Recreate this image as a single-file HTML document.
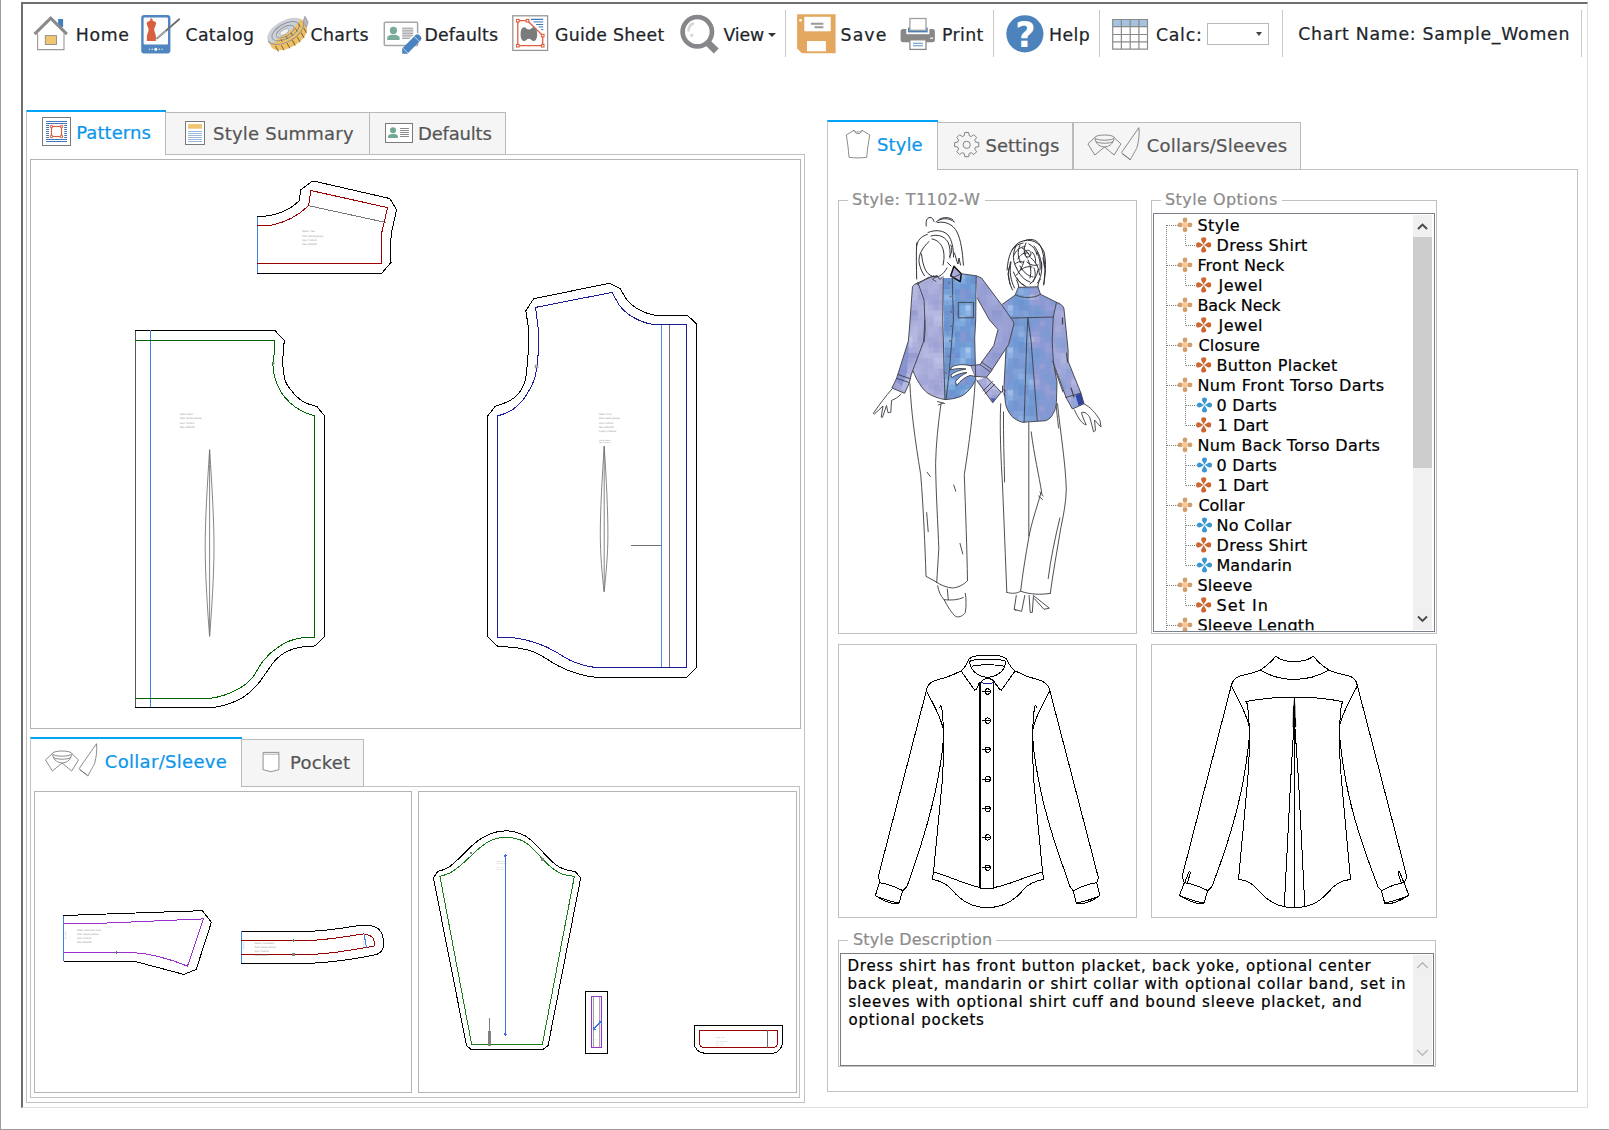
<!DOCTYPE html>
<html lang="en"><head><meta charset="utf-8"><title>Pattern Designer - Sample_Women</title>
<style>
html,body{margin:0;padding:0;background:#fff;}
body{width:1609px;height:1130px;position:relative;overflow:hidden;font-family:"DejaVu Sans","Liberation Sans",sans-serif;}
.t{position:absolute;white-space:pre;display:block;-webkit-text-stroke:0.22px currentColor;}
.b{position:absolute;box-sizing:border-box;}
svg{position:absolute;overflow:visible;}
.clip{clip-path:inset(0 0 6px 0);}

</style></head>
<body>
<!-- outer window edges -->
<div class="b" style="left:0;top:0;width:1px;height:1130px;background:#9a9a9a"></div>
<div class="b" style="left:0;top:1129px;width:1609px;height:1px;background:#9a9a9a"></div>
<!-- inset frame -->
<div class="b" style="left:21px;top:2px;width:1567px;height:1106px;border-style:solid;border-width:2px 1px 1px 2px;border-color:#6f6f6f #dedede #dedede #6f6f6f"></div>
<!-- toolbar separators -->
<div class="b" style="left:785px;top:10px;width:1px;height:47px;background:#c9c9c9"></div>
<div class="b" style="left:993px;top:10px;width:1px;height:47px;background:#c9c9c9"></div>
<div class="b" style="left:1099px;top:10px;width:1px;height:47px;background:#c9c9c9"></div>
<div class="b" style="left:1282px;top:10px;width:1px;height:47px;background:#c9c9c9"></div>
<div class="b" style="left:1581px;top:10px;width:1px;height:47px;background:#c9c9c9"></div>
<!-- calc select -->
<div class="b" style="left:1207px;top:23px;width:62px;height:22px;border:1px solid #b9b9b9;background:#fff"></div>
<div class="b" style="left:1256px;top:32px;width:0;height:0;border-left:3.5px solid transparent;border-right:3.5px solid transparent;border-top:4px solid #444"></div>
<div class="b" style="left:768px;top:33px;width:0;height:0;border-left:4px solid transparent;border-right:4px solid transparent;border-top:4px solid #333"></div>

<!-- LEFT PANEL: outer tab container -->
<div class="b" style="left:26px;top:154px;width:779px;height:949px;border:1px solid #c2c2c2"></div>
<!-- tabs -->
<div class="b" style="left:26px;top:110px;width:140px;height:45px;border-left:1px solid #c2c2c2;border-top:2px solid #00a2fa;background:#fff"></div>
<div class="b" style="left:165px;top:112px;width:205px;height:43px;border:1px solid #bababa;background:#f5f5f5"></div>
<div class="b" style="left:369px;top:112px;width:137px;height:43px;border:1px solid #bababa;background:#f5f5f5"></div>
<!-- pattern box -->
<div class="b" style="left:30px;top:159px;width:771px;height:570px;border:1px solid #b4b4b4"></div>
<!-- lower tab container -->
<div class="b" style="left:30px;top:786px;width:770px;height:312px;border:1px solid #c2c2c2"></div>
<div class="b" style="left:30px;top:737px;width:212px;height:50px;border-left:1px solid #c2c2c2;border-top:2px solid #00a2fa;background:#fff"></div>
<div class="b" style="left:241px;top:739px;width:123px;height:48px;border:1px solid #bababa;background:#f5f5f5"></div>
<div class="b" style="left:34px;top:791px;width:378px;height:302px;border:1px solid #b4b4b4"></div>
<div class="b" style="left:418px;top:791px;width:379px;height:302px;border:1px solid #b4b4b4"></div>

<!-- RIGHT PANEL -->
<div class="b" style="left:827px;top:169px;width:751px;height:923px;border:1px solid #c2c2c2"></div>
<div class="b" style="left:827px;top:120px;width:111px;height:50px;border-left:1px solid #c2c2c2;border-top:2px solid #00a2fa;background:#fff"></div>
<div class="b" style="left:937px;top:122px;width:136px;height:48px;border:1px solid #bababa;background:#f5f5f5"></div>
<div class="b" style="left:1073px;top:122px;width:228px;height:48px;border:1px solid #bababa;background:#f5f5f5"></div>
<!-- fieldsets -->
<div class="b" style="left:838px;top:200px;width:299px;height:434px;border:1px solid #c0c0c0"></div>
<div class="b" style="left:848px;top:190px;width:137px;height:20px;background:#fff"></div>
<div class="b" style="left:1151px;top:200px;width:286px;height:434px;border:1px solid #c0c0c0"></div>
<div class="b" style="left:1161px;top:190px;width:121px;height:20px;background:#fff"></div>
<!-- tree box -->
<div class="b" style="left:1153px;top:213px;width:282px;height:419px;border:1px solid #7c828c;background:#fff"></div>
<div class="b" style="left:1413px;top:215px;width:19px;height:415px;background:#f0f0f0"></div>
<div class="b" style="left:1413px;top:237px;width:19px;height:231px;background:#cdcdcd"></div>
<!-- flats -->
<div class="b" style="left:838px;top:644px;width:299px;height:274px;border:1px solid #c0c0c0"></div>
<div class="b" style="left:1151px;top:644px;width:286px;height:274px;border:1px solid #c0c0c0"></div>
<!-- description -->
<div class="b" style="left:838px;top:940px;width:598px;height:127px;border:1px solid #c0c0c0"></div>
<div class="b" style="left:848px;top:930px;width:148px;height:20px;background:#fff"></div>
<div class="b" style="left:840px;top:953px;width:594px;height:113px;border:1px solid #7c7c7c;background:#fff"></div>
<div class="b" style="left:1413px;top:955px;width:19px;height:109px;background:#f0f0f0"></div>

<svg width="1609" height="1130" viewBox="0 0 1609 1130" style="left:0;top:0">
<!-- HOME -->
<g>
<rect x="58.1" y="19" width="5" height="8" fill="#3f7fbf"/>
<path d="M37.6 33.5V49.6H64V33.5" fill="#fff" stroke="#9a9a9a" stroke-width="1.1"/>
<path d="M34.6 34.2L50.7 18.2L66.9 34.2" fill="none" stroke="#8a8a8a" stroke-width="3.1" stroke-linejoin="miter"/>
<rect x="45.3" y="35.6" width="11.2" height="8.9" fill="#f0c674" stroke="#8a8a8a" stroke-width="0.9"/>
</g>
<!-- CATALOG -->
<g>
<rect x="141.2" y="15" width="29.2" height="38.6" rx="3" fill="#4f86c0"/>
<rect x="143.6" y="17.6" width="24.4" height="26.8" rx="1" fill="#fbfcfe"/>
<path d="M151.4 18.2c-1 0-1.3 1.6-1.3 2.6c-1.8 .4-3.4 1.2-3.4 2.4c0 2.2 1.9 4.2 1.9 6.4c0 2.4-1.7 4.4-1.7 7.2v4.2h9v-4.2c0-2.8-1.7-4.800-1.700-7.200c0-2.200 1.900-4.200 1.900-6.400c0-1.200-1.600-2-3.400-2.400c0-1-.3-2.600-1.300-2.600z" fill="#d9603f"/>
<path d="M157.200 38.300L179.200 19.300" stroke="#6e6e6e" stroke-width="1.8" stroke-linecap="round"/>
<path d="M157.200 38.300L166 30.700" stroke="#b0b0b0" stroke-width="1.200"/>
<circle cx="155.800" cy="49.200" r="1.500" fill="#fff"/>
<circle cx="152.200" cy="49.200" r=".8" fill="#dfe9f4"/><circle cx="149.400" cy="49.200" r=".7" fill="#dfe9f4"/>
<circle cx="159.400" cy="49.200" r=".8" fill="#dfe9f4"/><circle cx="162.200" cy="49.200" r=".7" fill="#dfe9f4"/>
</g>
<!-- CHARTS tape measure -->
<g transform="rotate(-29 286 32)">
<path d="M266 31v7c0 5.500 9 10 20 10s20-4.500 20-10v-7z" fill="#efc062"/>
<ellipse cx="286" cy="31" rx="20" ry="10.500" fill="#cdd0d7"/>
<path d="M269 36.500C275 41 283 41.500 286 41.500C297 41.500 306 37 306 31C306 29.500 305.500 28.500 305 27.500C300 31.500 292 33.500 284 33.500C278 33.500 272 34.500 269 36.500z" fill="#efc062"/>
<ellipse cx="286" cy="31" rx="15" ry="7.300" fill="none" stroke="#8f939c" stroke-width=".9"/>
<ellipse cx="285.500" cy="31.200" rx="10" ry="4.600" fill="none" stroke="#8f939c" stroke-width=".9"/>
<ellipse cx="284.500" cy="31.200" rx="5" ry="2.200" fill="#f3f4f6" stroke="#9fa3ab" stroke-width=".7"/>
<path d="M266 31c0 5.500 9 10.500 20 10.500s20-5 20-10.500" fill="none" stroke="#8a8c93" stroke-width=".9"/>
<path d="M270 39v6.500M275.500 41.200v6M281.500 42.200v6M287.500 42.300v6M293.500 41.700v6M299 40v6M303.500 37v5.500" stroke="#6f5f3f" stroke-width=".9"/>
<path d="M284 35.500v3M290 35v3.500M296 33.500v3.500M301 31v3.500M278 36v2.500" stroke="#6f5f3f" stroke-width=".8"/>
<path d="M306 31l4.200-3.500v6.500l-4.200 4z" fill="#b4b7be" stroke="#8a8c93" stroke-width=".6"/>
</g>
<!-- DEFAULTS card+pencil -->
<g>
<rect x="384.300" y="22.300" width="33.300" height="23.200" rx="1" fill="#fff" stroke="#a6a6a6" stroke-width="1.500"/>
<circle cx="393.400" cy="30.400" r="3.600" fill="#7aab98"/>
<path d="M387.200 39.900v-2.200c0-1.800 2.600-2.600 4.800-2.900h2.800c2.200.3 4.800 1.100 4.800 2.900v2.200z" fill="#7aab98"/>
<rect x="402.200" y="27.700" width="11" height="11.200" fill="#dcdcdc"/>
<path d="M402.200 28.200h11M402.200 30.800h11M402.200 33.300h11M402.200 35.800h11M402.200 38.400h11" stroke="#a2a2a2" stroke-width="1"/>
<path d="M409 39l8-6.500l4.500 5.500l-8 6.500z" fill="#fff"/>
<path d="M402.200 53.800v-5.300l13.300-13.400a2.600 2.600 0 0 1 3.700 0l1.500 1.500a2.600 2.600 0 0 1 0 3.700l-13.300 13.400z" fill="#4a84c0"/>
<path d="M403.200 48.400l4.800 4.800M414.600 36.800l4.800 4.800" stroke="#dbe7f4" stroke-width=".8"/>
</g>
<!-- GUIDE SHEET -->
<g>
<rect x="512.800" y="15.800" width="34.800" height="34.600" fill="#fff" stroke="#979797" stroke-width="1.300"/>
<path d="M517.800 20.700H527.500L542.700 35.600V45.700H517.800z" fill="none" stroke="#e0603f" stroke-width="1.300"/>
<g fill="#fff" stroke="#e0603f" stroke-width="1.100">
<rect x="516.500" y="19.400" width="2.600" height="2.600"/><rect x="526.200" y="19.400" width="2.600" height="2.600"/>
<rect x="541.400" y="34.300" width="2.600" height="2.600"/><rect x="541.400" y="44.400" width="2.600" height="2.600"/><rect x="516.500" y="44.400" width="2.600" height="2.600"/>
</g>
<path d="M524.300 27.300c1.600 0 2.400 2.300 4.600 2.300s3-2.300 4.600-2.300c2.600 0 3.700 3.200 3.700 6.900s-1.100 6.900-3.700 6.900c-1.600 0-2.400-2.300-4.600-2.300s-3 2.300-4.600 2.300c-2.600 0-3.700-3.200-3.700-6.900s1.100-6.900 3.700-6.900z" fill="#7b7b7b"/>
<path d="M531 19.400h12.200M536.100 24.500h7.100" stroke="#3f77bb" stroke-width="1.100"/>
<path d="M533.500 21.900h9.700M538.600 26.900h4.600" stroke="#8fb0d8" stroke-width="1.600"/>
<path d="M541.200 29.500h2" stroke="#3f77bb" stroke-width="1"/>
</g>
<!-- VIEW magnifier -->
<g>
<path d="M708 43l8.300 8" stroke="#86878a" stroke-width="7" />
<circle cx="697.300" cy="31.700" r="14.700" fill="#fff" stroke="#86878a" stroke-width="4.700"/>
<path d="M688.500 30.500c.3-3.500 2.200-6 4.500-7" fill="none" stroke="#d6d7d9" stroke-width="2.600" stroke-linecap="round"/>
<circle cx="691.700" cy="35.300" r="1.700" fill="#d6d7d9"/>
</g>
<!-- SAVE -->
<g>
<path d="M797.100 14.200H835.600V53.300H801.900L797.100 48.500z" fill="#e3a75f"/>
<rect x="804.300" y="16.800" width="26.400" height="14.500" fill="#fff"/>
<rect x="807" y="41" width="18.900" height="10.300" fill="#fff"/>
<circle cx="800.500" cy="20.300" r="1.300" fill="#fff"/>
<path d="M810.900 23.800h12.500M814.600 27.300h8.800" stroke="#9b9b9b" stroke-width="2"/>
</g>
<!-- PRINT -->
<g>
<rect x="900.600" y="28.900" width="34.300" height="13.400" rx="2.500" fill="#888"/>
<rect x="906.300" y="28" width="23.100" height="6.200" fill="#fff"/>
<rect x="908" y="27.600" width="19.700" height="4.800" fill="#4a7fb8"/>
<rect x="909.900" y="18.500" width="16.100" height="11.800" fill="#fff" stroke="#a0a0a0" stroke-width="1.300"/>
<rect x="909.900" y="39.800" width="16.100" height="9.600" fill="#fff" stroke="#888" stroke-width="1.300"/>
<path d="M913 43.300h9.900M913 45.700h9.900" stroke="#5b8cc2" stroke-width="1.100"/>
<rect x="930.200" y="37.500" width="2.900" height="1.500" fill="#e8e8e8"/>
</g>
<!-- HELP -->
<circle cx="1024.900" cy="33.800" r="18.600" fill="#4d83bc"/>
<text x="1025.300" y="46.800" text-anchor="middle" font-family="DejaVu Sans, Liberation Sans, sans-serif" font-weight="bold" font-size="35" fill="#fff">?</text>
<!-- CALC grid -->
<g>
<rect x="1112.700" y="19.500" width="34.800" height="7.100" fill="#a5c3e0"/>
<path d="M1112.700 19.500H1147.500V49.200H1112.700zM1121.400 19.500V49.200M1130.200 19.500V49.200M1138.900 19.500V49.200M1112.700 26.600H1147.500M1112.700 34.500H1147.500M1112.700 41.800H1147.500" fill="none" stroke="#8a8a8a" stroke-width="1.200"/>
</g>
</svg>

<svg width="1609" height="1130" viewBox="0 0 1609 1130" style="left:0;top:0">
<!-- Patterns icon -->
<g>
<rect x="42.500" y="117.500" width="28" height="28" fill="#fff" stroke="#7a7a7a" stroke-width="1"/>
<path d="M46.100 121.500H67M46.100 123.500H67M46.100 139.500H67M46.100 141.500H67" stroke="#3f77bb" stroke-width="1"/>
<path d="M46.100 125.500H49M46.100 127.500H49M46.100 129.500H49M46.100 131.500H49M46.100 133.500H49M46.100 135.500H49M46.100 137.500H49M64.200 125.500H67M64.200 127.500H67M64.200 129.500H67M64.200 131.500H67M64.200 133.500H67M64.200 135.500H67M64.200 137.500H67" stroke="#3f77bb" stroke-width="1"/>
<rect x="51.500" y="126.500" width="10" height="10" fill="none" stroke="#d85a3a" stroke-width="1.100"/>
<g fill="#fff" stroke="#d85a3a" stroke-width="1"><rect x="50.300" y="125.300" width="2.400" height="2.400" rx=".6"/><rect x="60.300" y="125.300" width="2.400" height="2.400" rx=".6"/><rect x="50.300" y="135.300" width="2.400" height="2.400" rx=".6"/><rect x="60.300" y="135.300" width="2.400" height="2.400" rx=".6"/></g>
</g>
<!-- Style Summary icon -->
<g>
<rect x="185.500" y="121.500" width="19" height="23" fill="#fff" stroke="#7a7a7a" stroke-width="1"/>
<rect x="188.100" y="124.100" width="13.900" height="4.600" fill="#efc472"/>
<path d="M188.100 131.500H202M188.100 133.500H202M188.100 135.500H202M188.100 137.500H202M188.100 139.500H202M188.100 141.500H202" stroke="#8faed4" stroke-width=".9"/>
</g>
<!-- Defaults tab icon -->
<g>
<rect x="385.500" y="123.500" width="27" height="19" fill="#fff" stroke="#7a7a7a" stroke-width="1"/>
<circle cx="393" cy="130.300" r="3" fill="#72a892"/>
<path d="M388.100 137.900v-1.800c0-1.400 2-2 3.800-2.200h2.200c1.800.2 3.800.8 3.800 2.200v1.800z" fill="#72a892"/>
<path d="M400.100 128.500H408.900M400.100 130.500H408.900M400.100 132.500H408.900M400.100 134.500H408.900M400.100 136.500H408.900" stroke="#7a7a7a" stroke-width=".9"/>
</g>
<!-- Style (shirt) icon -->
<path d="M846.300 135L854 130.300C855.500 134.800 860.600 134.800 862.100 130.300L869.800 135C868.600 142 867.300 149 866.700 157.300C861 158.100 854.700 158.100 849 157.300C848.400 149 847.500 142 846.300 135z" fill="#fff" stroke="#6e6e6e" stroke-width=".8"/>
<path d="M854 130.300C855.500 132.600 860.600 132.600 862.100 130.300" fill="none" stroke="#6e6e6e" stroke-width=".7"/>
<!-- Settings gear -->
<g fill="none" stroke="#777" stroke-width=".9">
<path id="gearp" d="M964.700 132.500h4l.5 3.200 2 .85 2.600-1.900 2.850 2.850-1.900 2.600.85 2 3.200.5v4l-3.200.5-.85 2 1.900 2.600-2.850 2.850-2.600-1.900-2 .85-.5 3.200h-4l-.5-3.200-2-.85-2.600 1.900-2.850-2.850 1.900-2.600-.85-2-3.200-.5v-4l3.200-.5.85-2-1.900-2.600 2.850-2.850 2.600 1.900 2-.85z"/>
<circle cx="966.700" cy="144.800" r="3.600"/>
</g>
<!-- collar/sleeve icon (lower tab) -->
<g id="cs1" fill="none" stroke="#6e6e6e" stroke-width=".8">
<ellipse cx="62.100" cy="753.600" rx="9.700" ry="2.600"/>
<path d="M52.400 753.600L45.500 759.900L52.400 771L62.100 763L71.700 771L78.500 759.900L71.700 753.600"/>
<path d="M52.600 754.800C54 761 58 762.500 62.100 763C66.200 762.500 70.200 761 71.600 754.800"/>
<path d="M53.500 757.500C57 759.800 67 759.800 70.700 757.500"/>
<path d="M96.500 743.700L79.100 768.600L87.800 776C91.500 769 94 765 94.600 763.600C96.300 757 97.300 750 96.500 743.700z"/>
<path d="M79.700 769.800L87.400 775"/>
</g>
<!-- collar/sleeve icon (right tab) -->
<g fill="none" stroke="#6e6e6e" stroke-width=".8" transform="translate(1042.400 -616)">
<ellipse cx="62.100" cy="753.600" rx="9.700" ry="2.600"/>
<path d="M52.400 753.600L45.500 759.900L52.400 771L62.100 763L71.700 771L78.500 759.900L71.700 753.600"/>
<path d="M52.600 754.800C54 761 58 762.500 62.100 763C66.200 762.500 70.200 761 71.600 754.800"/>
<path d="M53.500 757.500C57 759.800 67 759.800 70.700 757.500"/>
<path d="M96.500 743.700L79.100 768.600L87.800 776C91.500 769 94 765 94.600 763.600C96.300 757 97.300 750 96.500 743.700z"/>
<path d="M79.700 769.800L87.400 775"/>
</g>
<!-- pocket icon -->
<path d="M263.100 752.400H278.900V769.700L271 771.700L263.100 769.700z" fill="#fff" stroke="#777" stroke-width=".8"/>
<path d="M263.100 754.200H278.900" stroke="#999" stroke-width=".8"/>
</svg>

<svg width="1609" height="1130" viewBox="0 0 1609 1130" style="left:0;top:0">
<clipPath id="treeclip"><rect x="1154" y="214" width="259" height="417"/></clipPath>
<g clip-path="url(#treeclip)">
<path d="M1166.5 225V640" stroke="#7f7f7f" stroke-width="1" stroke-dasharray="1 1" fill="none"/>
<path d="M1167 225.5H1178" stroke="#7f7f7f" stroke-width="1" stroke-dasharray="1 1" fill="none"/>
<path d="M1185.5 235V245.5" stroke="#7f7f7f" stroke-width="1" stroke-dasharray="1 1" fill="none"/>
<path d="M1186 245.5H1196.5" stroke="#7f7f7f" stroke-width="1" stroke-dasharray="1 1" fill="none"/>
<path d="M1167 265.5H1178" stroke="#7f7f7f" stroke-width="1" stroke-dasharray="1 1" fill="none"/>
<path d="M1185.5 275V285.5" stroke="#7f7f7f" stroke-width="1" stroke-dasharray="1 1" fill="none"/>
<path d="M1186 285.5H1196.5" stroke="#7f7f7f" stroke-width="1" stroke-dasharray="1 1" fill="none"/>
<path d="M1167 305.5H1178" stroke="#7f7f7f" stroke-width="1" stroke-dasharray="1 1" fill="none"/>
<path d="M1185.5 315V325.5" stroke="#7f7f7f" stroke-width="1" stroke-dasharray="1 1" fill="none"/>
<path d="M1186 325.5H1196.5" stroke="#7f7f7f" stroke-width="1" stroke-dasharray="1 1" fill="none"/>
<path d="M1167 345.5H1178" stroke="#7f7f7f" stroke-width="1" stroke-dasharray="1 1" fill="none"/>
<path d="M1185.5 355V365.5" stroke="#7f7f7f" stroke-width="1" stroke-dasharray="1 1" fill="none"/>
<path d="M1186 365.5H1196.5" stroke="#7f7f7f" stroke-width="1" stroke-dasharray="1 1" fill="none"/>
<path d="M1167 385.5H1178" stroke="#7f7f7f" stroke-width="1" stroke-dasharray="1 1" fill="none"/>
<path d="M1185.5 395V425.5" stroke="#7f7f7f" stroke-width="1" stroke-dasharray="1 1" fill="none"/>
<path d="M1186 405.5H1196.5" stroke="#7f7f7f" stroke-width="1" stroke-dasharray="1 1" fill="none"/>
<path d="M1186 425.5H1196.5" stroke="#7f7f7f" stroke-width="1" stroke-dasharray="1 1" fill="none"/>
<path d="M1167 445.5H1178" stroke="#7f7f7f" stroke-width="1" stroke-dasharray="1 1" fill="none"/>
<path d="M1185.5 455V485.5" stroke="#7f7f7f" stroke-width="1" stroke-dasharray="1 1" fill="none"/>
<path d="M1186 465.5H1196.5" stroke="#7f7f7f" stroke-width="1" stroke-dasharray="1 1" fill="none"/>
<path d="M1186 485.5H1196.5" stroke="#7f7f7f" stroke-width="1" stroke-dasharray="1 1" fill="none"/>
<path d="M1167 505.5H1178" stroke="#7f7f7f" stroke-width="1" stroke-dasharray="1 1" fill="none"/>
<path d="M1185.5 515V565.5" stroke="#7f7f7f" stroke-width="1" stroke-dasharray="1 1" fill="none"/>
<path d="M1186 525.5H1196.5" stroke="#7f7f7f" stroke-width="1" stroke-dasharray="1 1" fill="none"/>
<path d="M1186 545.5H1196.5" stroke="#7f7f7f" stroke-width="1" stroke-dasharray="1 1" fill="none"/>
<path d="M1186 565.5H1196.5" stroke="#7f7f7f" stroke-width="1" stroke-dasharray="1 1" fill="none"/>
<path d="M1167 585.5H1178" stroke="#7f7f7f" stroke-width="1" stroke-dasharray="1 1" fill="none"/>
<path d="M1185.5 595V605.5" stroke="#7f7f7f" stroke-width="1" stroke-dasharray="1 1" fill="none"/>
<path d="M1186 605.5H1196.5" stroke="#7f7f7f" stroke-width="1" stroke-dasharray="1 1" fill="none"/>
<path d="M1167 625.5H1178" stroke="#7f7f7f" stroke-width="1" stroke-dasharray="1 1" fill="none"/>
<rect x="1182.4" y="222.3" width="5.2" height="5.2" fill="#f9c794"/><circle cx="1185.0" cy="220.0" r="2.45" fill="#d19f6d"/><circle cx="1189.9" cy="224.9" r="2.45" fill="#d19f6d"/><circle cx="1185.0" cy="229.8" r="2.45" fill="#d19f6d"/><circle cx="1180.1" cy="224.9" r="2.45" fill="#d19f6d"/>
<path transform="rotate(0 1203.7 244.9)" d="M1203.7 244.6C1202.7 242.3 1201.1 241.1 1201.1 239.6A2.6 2.3 0 0 1 1206.3 239.6C1206.3 241.1 1204.7 242.3 1203.7 244.6z" fill="#cc6633"/><path transform="rotate(90 1203.7 244.9)" d="M1203.7 244.6C1202.7 242.3 1201.1 241.1 1201.1 239.6A2.6 2.3 0 0 1 1206.3 239.6C1206.3 241.1 1204.7 242.3 1203.7 244.6z" fill="#cc6633"/><path transform="rotate(180 1203.7 244.9)" d="M1203.7 244.6C1202.7 242.3 1201.1 241.1 1201.1 239.6A2.6 2.3 0 0 1 1206.3 239.6C1206.3 241.1 1204.7 242.3 1203.7 244.6z" fill="#cc6633"/><path transform="rotate(270 1203.7 244.9)" d="M1203.7 244.6C1202.7 242.3 1201.1 241.1 1201.1 239.6A2.6 2.3 0 0 1 1206.3 239.6C1206.3 241.1 1204.7 242.3 1203.7 244.6z" fill="#cc6633"/>
<rect x="1182.4" y="262.3" width="5.2" height="5.2" fill="#f9c794"/><circle cx="1185.0" cy="260.0" r="2.45" fill="#d19f6d"/><circle cx="1189.9" cy="264.9" r="2.45" fill="#d19f6d"/><circle cx="1185.0" cy="269.8" r="2.45" fill="#d19f6d"/><circle cx="1180.1" cy="264.9" r="2.45" fill="#d19f6d"/>
<path transform="rotate(0 1203.7 284.9)" d="M1203.7 284.6C1202.7 282.3 1201.1 281.1 1201.1 279.6A2.6 2.3 0 0 1 1206.3 279.6C1206.3 281.1 1204.7 282.3 1203.7 284.6z" fill="#cc6633"/><path transform="rotate(90 1203.7 284.9)" d="M1203.7 284.6C1202.7 282.3 1201.1 281.1 1201.1 279.6A2.6 2.3 0 0 1 1206.3 279.6C1206.3 281.1 1204.7 282.3 1203.7 284.6z" fill="#cc6633"/><path transform="rotate(180 1203.7 284.9)" d="M1203.7 284.6C1202.7 282.3 1201.1 281.1 1201.1 279.6A2.6 2.3 0 0 1 1206.3 279.6C1206.3 281.1 1204.7 282.3 1203.7 284.6z" fill="#cc6633"/><path transform="rotate(270 1203.7 284.9)" d="M1203.7 284.6C1202.7 282.3 1201.1 281.1 1201.1 279.6A2.6 2.3 0 0 1 1206.3 279.6C1206.3 281.1 1204.7 282.3 1203.7 284.6z" fill="#cc6633"/>
<rect x="1182.4" y="302.3" width="5.2" height="5.2" fill="#f9c794"/><circle cx="1185.0" cy="300.0" r="2.45" fill="#d19f6d"/><circle cx="1189.9" cy="304.9" r="2.45" fill="#d19f6d"/><circle cx="1185.0" cy="309.8" r="2.45" fill="#d19f6d"/><circle cx="1180.1" cy="304.9" r="2.45" fill="#d19f6d"/>
<path transform="rotate(0 1203.7 324.9)" d="M1203.7 324.6C1202.7 322.3 1201.1 321.1 1201.1 319.6A2.6 2.3 0 0 1 1206.3 319.6C1206.3 321.1 1204.7 322.3 1203.7 324.6z" fill="#cc6633"/><path transform="rotate(90 1203.7 324.9)" d="M1203.7 324.6C1202.7 322.3 1201.1 321.1 1201.1 319.6A2.6 2.3 0 0 1 1206.3 319.6C1206.3 321.1 1204.7 322.3 1203.7 324.6z" fill="#cc6633"/><path transform="rotate(180 1203.7 324.9)" d="M1203.7 324.6C1202.7 322.3 1201.1 321.1 1201.1 319.6A2.6 2.3 0 0 1 1206.3 319.6C1206.3 321.1 1204.7 322.3 1203.7 324.6z" fill="#cc6633"/><path transform="rotate(270 1203.7 324.9)" d="M1203.7 324.6C1202.7 322.3 1201.1 321.1 1201.1 319.6A2.6 2.3 0 0 1 1206.3 319.6C1206.3 321.1 1204.7 322.3 1203.7 324.6z" fill="#cc6633"/>
<rect x="1182.4" y="342.3" width="5.2" height="5.2" fill="#f9c794"/><circle cx="1185.0" cy="340.0" r="2.45" fill="#d19f6d"/><circle cx="1189.9" cy="344.9" r="2.45" fill="#d19f6d"/><circle cx="1185.0" cy="349.8" r="2.45" fill="#d19f6d"/><circle cx="1180.1" cy="344.9" r="2.45" fill="#d19f6d"/>
<path transform="rotate(0 1203.7 364.9)" d="M1203.7 364.6C1202.7 362.3 1201.1 361.1 1201.1 359.6A2.6 2.3 0 0 1 1206.3 359.6C1206.3 361.1 1204.7 362.3 1203.7 364.6z" fill="#cc6633"/><path transform="rotate(90 1203.7 364.9)" d="M1203.7 364.6C1202.7 362.3 1201.1 361.1 1201.1 359.6A2.6 2.3 0 0 1 1206.3 359.6C1206.3 361.1 1204.7 362.3 1203.7 364.6z" fill="#cc6633"/><path transform="rotate(180 1203.7 364.9)" d="M1203.7 364.6C1202.7 362.3 1201.1 361.1 1201.1 359.6A2.6 2.3 0 0 1 1206.3 359.6C1206.3 361.1 1204.7 362.3 1203.7 364.6z" fill="#cc6633"/><path transform="rotate(270 1203.7 364.9)" d="M1203.7 364.6C1202.7 362.3 1201.1 361.1 1201.1 359.6A2.6 2.3 0 0 1 1206.3 359.6C1206.3 361.1 1204.7 362.3 1203.7 364.6z" fill="#cc6633"/>
<rect x="1182.4" y="382.3" width="5.2" height="5.2" fill="#f9c794"/><circle cx="1185.0" cy="380.0" r="2.45" fill="#d19f6d"/><circle cx="1189.9" cy="384.9" r="2.45" fill="#d19f6d"/><circle cx="1185.0" cy="389.8" r="2.45" fill="#d19f6d"/><circle cx="1180.1" cy="384.9" r="2.45" fill="#d19f6d"/>
<path transform="rotate(0 1204.5 405.0)" d="M1204.5 404.7C1203.5 402.4 1201.9 401.2 1201.9 399.7A2.6 2.3 0 0 1 1207.1 399.7C1207.1 401.2 1205.5 402.4 1204.5 404.7z" fill="#3b97d0"/><path transform="rotate(90 1204.5 405.0)" d="M1204.5 404.7C1203.5 402.4 1201.9 401.2 1201.9 399.7A2.6 2.3 0 0 1 1207.1 399.7C1207.1 401.2 1205.5 402.4 1204.5 404.7z" fill="#3b97d0"/><path transform="rotate(180 1204.5 405.0)" d="M1204.5 404.7C1203.5 402.4 1201.9 401.2 1201.9 399.7A2.6 2.3 0 0 1 1207.1 399.7C1207.1 401.2 1205.5 402.4 1204.5 404.7z" fill="#3b97d0"/><path transform="rotate(270 1204.5 405.0)" d="M1204.5 404.7C1203.5 402.4 1201.9 401.2 1201.9 399.7A2.6 2.3 0 0 1 1207.1 399.7C1207.1 401.2 1205.5 402.4 1204.5 404.7z" fill="#3b97d0"/>
<path transform="rotate(0 1203.7 424.9)" d="M1203.7 424.6C1202.7 422.3 1201.1 421.1 1201.1 419.6A2.6 2.3 0 0 1 1206.3 419.6C1206.3 421.1 1204.7 422.3 1203.7 424.6z" fill="#cc6633"/><path transform="rotate(90 1203.7 424.9)" d="M1203.7 424.6C1202.7 422.3 1201.1 421.1 1201.1 419.6A2.6 2.3 0 0 1 1206.3 419.6C1206.3 421.1 1204.7 422.3 1203.7 424.6z" fill="#cc6633"/><path transform="rotate(180 1203.7 424.9)" d="M1203.7 424.6C1202.7 422.3 1201.1 421.1 1201.1 419.6A2.6 2.3 0 0 1 1206.3 419.6C1206.3 421.1 1204.7 422.3 1203.7 424.6z" fill="#cc6633"/><path transform="rotate(270 1203.7 424.9)" d="M1203.7 424.6C1202.7 422.3 1201.1 421.1 1201.1 419.6A2.6 2.3 0 0 1 1206.3 419.6C1206.3 421.1 1204.7 422.3 1203.7 424.6z" fill="#cc6633"/>
<rect x="1182.4" y="442.3" width="5.2" height="5.2" fill="#f9c794"/><circle cx="1185.0" cy="440.0" r="2.45" fill="#d19f6d"/><circle cx="1189.9" cy="444.9" r="2.45" fill="#d19f6d"/><circle cx="1185.0" cy="449.8" r="2.45" fill="#d19f6d"/><circle cx="1180.1" cy="444.9" r="2.45" fill="#d19f6d"/>
<path transform="rotate(0 1204.5 465.0)" d="M1204.5 464.7C1203.5 462.4 1201.9 461.2 1201.9 459.7A2.6 2.3 0 0 1 1207.1 459.7C1207.1 461.2 1205.5 462.4 1204.5 464.7z" fill="#3b97d0"/><path transform="rotate(90 1204.5 465.0)" d="M1204.5 464.7C1203.5 462.4 1201.9 461.2 1201.9 459.7A2.6 2.3 0 0 1 1207.1 459.7C1207.1 461.2 1205.5 462.4 1204.5 464.7z" fill="#3b97d0"/><path transform="rotate(180 1204.5 465.0)" d="M1204.5 464.7C1203.5 462.4 1201.9 461.2 1201.9 459.7A2.6 2.3 0 0 1 1207.1 459.7C1207.1 461.2 1205.5 462.4 1204.5 464.7z" fill="#3b97d0"/><path transform="rotate(270 1204.5 465.0)" d="M1204.5 464.7C1203.5 462.4 1201.9 461.2 1201.9 459.7A2.6 2.3 0 0 1 1207.1 459.7C1207.1 461.2 1205.5 462.4 1204.5 464.7z" fill="#3b97d0"/>
<path transform="rotate(0 1203.7 484.9)" d="M1203.7 484.6C1202.7 482.3 1201.1 481.1 1201.1 479.6A2.6 2.3 0 0 1 1206.3 479.6C1206.3 481.1 1204.7 482.3 1203.7 484.6z" fill="#cc6633"/><path transform="rotate(90 1203.7 484.9)" d="M1203.7 484.6C1202.7 482.3 1201.1 481.1 1201.1 479.6A2.6 2.3 0 0 1 1206.3 479.6C1206.3 481.1 1204.7 482.3 1203.7 484.6z" fill="#cc6633"/><path transform="rotate(180 1203.7 484.9)" d="M1203.7 484.6C1202.7 482.3 1201.1 481.1 1201.1 479.6A2.6 2.3 0 0 1 1206.3 479.6C1206.3 481.1 1204.7 482.3 1203.7 484.6z" fill="#cc6633"/><path transform="rotate(270 1203.7 484.9)" d="M1203.7 484.6C1202.7 482.3 1201.1 481.1 1201.1 479.6A2.6 2.3 0 0 1 1206.3 479.6C1206.3 481.1 1204.7 482.3 1203.7 484.6z" fill="#cc6633"/>
<rect x="1182.4" y="502.3" width="5.2" height="5.2" fill="#f9c794"/><circle cx="1185.0" cy="500.0" r="2.45" fill="#d19f6d"/><circle cx="1189.9" cy="504.9" r="2.45" fill="#d19f6d"/><circle cx="1185.0" cy="509.8" r="2.45" fill="#d19f6d"/><circle cx="1180.1" cy="504.9" r="2.45" fill="#d19f6d"/>
<path transform="rotate(0 1204.5 525.0)" d="M1204.5 524.7C1203.5 522.4 1201.9 521.2 1201.9 519.7A2.6 2.3 0 0 1 1207.1 519.7C1207.1 521.2 1205.5 522.4 1204.5 524.7z" fill="#3b97d0"/><path transform="rotate(90 1204.5 525.0)" d="M1204.5 524.7C1203.5 522.4 1201.9 521.2 1201.9 519.7A2.6 2.3 0 0 1 1207.1 519.7C1207.1 521.2 1205.5 522.4 1204.5 524.7z" fill="#3b97d0"/><path transform="rotate(180 1204.5 525.0)" d="M1204.5 524.7C1203.5 522.4 1201.9 521.2 1201.9 519.7A2.6 2.3 0 0 1 1207.1 519.7C1207.1 521.2 1205.5 522.4 1204.5 524.7z" fill="#3b97d0"/><path transform="rotate(270 1204.5 525.0)" d="M1204.5 524.7C1203.5 522.4 1201.9 521.2 1201.9 519.7A2.6 2.3 0 0 1 1207.1 519.7C1207.1 521.2 1205.5 522.4 1204.5 524.7z" fill="#3b97d0"/>
<path transform="rotate(0 1203.7 544.9)" d="M1203.7 544.6C1202.7 542.3 1201.1 541.1 1201.1 539.6A2.6 2.3 0 0 1 1206.3 539.6C1206.3 541.1 1204.7 542.3 1203.7 544.6z" fill="#cc6633"/><path transform="rotate(90 1203.7 544.9)" d="M1203.7 544.6C1202.7 542.3 1201.1 541.1 1201.1 539.6A2.6 2.3 0 0 1 1206.3 539.6C1206.3 541.1 1204.7 542.3 1203.7 544.6z" fill="#cc6633"/><path transform="rotate(180 1203.7 544.9)" d="M1203.7 544.6C1202.7 542.3 1201.1 541.1 1201.1 539.6A2.6 2.3 0 0 1 1206.3 539.6C1206.3 541.1 1204.7 542.3 1203.7 544.6z" fill="#cc6633"/><path transform="rotate(270 1203.7 544.9)" d="M1203.7 544.6C1202.7 542.3 1201.1 541.1 1201.1 539.6A2.6 2.3 0 0 1 1206.3 539.6C1206.3 541.1 1204.7 542.3 1203.7 544.6z" fill="#cc6633"/>
<path transform="rotate(0 1204.5 565.0)" d="M1204.5 564.7C1203.5 562.4 1201.9 561.2 1201.9 559.7A2.6 2.3 0 0 1 1207.1 559.7C1207.1 561.2 1205.5 562.4 1204.5 564.7z" fill="#3b97d0"/><path transform="rotate(90 1204.5 565.0)" d="M1204.5 564.7C1203.5 562.4 1201.9 561.2 1201.9 559.7A2.6 2.3 0 0 1 1207.1 559.7C1207.1 561.2 1205.5 562.4 1204.5 564.7z" fill="#3b97d0"/><path transform="rotate(180 1204.5 565.0)" d="M1204.5 564.7C1203.5 562.4 1201.9 561.2 1201.9 559.7A2.6 2.3 0 0 1 1207.1 559.7C1207.1 561.2 1205.5 562.4 1204.5 564.7z" fill="#3b97d0"/><path transform="rotate(270 1204.5 565.0)" d="M1204.5 564.7C1203.5 562.4 1201.9 561.2 1201.9 559.7A2.6 2.3 0 0 1 1207.1 559.7C1207.1 561.2 1205.5 562.4 1204.5 564.7z" fill="#3b97d0"/>
<rect x="1182.4" y="582.3" width="5.2" height="5.2" fill="#f9c794"/><circle cx="1185.0" cy="580.0" r="2.45" fill="#d19f6d"/><circle cx="1189.9" cy="584.9" r="2.45" fill="#d19f6d"/><circle cx="1185.0" cy="589.8" r="2.45" fill="#d19f6d"/><circle cx="1180.1" cy="584.9" r="2.45" fill="#d19f6d"/>
<path transform="rotate(0 1203.7 604.9)" d="M1203.7 604.6C1202.7 602.3 1201.1 601.1 1201.1 599.6A2.6 2.3 0 0 1 1206.3 599.6C1206.3 601.1 1204.7 602.3 1203.7 604.6z" fill="#cc6633"/><path transform="rotate(90 1203.7 604.9)" d="M1203.7 604.6C1202.7 602.3 1201.1 601.1 1201.1 599.6A2.6 2.3 0 0 1 1206.3 599.6C1206.3 601.1 1204.7 602.3 1203.7 604.6z" fill="#cc6633"/><path transform="rotate(180 1203.7 604.9)" d="M1203.7 604.6C1202.7 602.3 1201.1 601.1 1201.1 599.6A2.6 2.3 0 0 1 1206.3 599.6C1206.3 601.1 1204.7 602.3 1203.7 604.6z" fill="#cc6633"/><path transform="rotate(270 1203.7 604.9)" d="M1203.7 604.6C1202.7 602.3 1201.1 601.1 1201.1 599.6A2.6 2.3 0 0 1 1206.3 599.6C1206.3 601.1 1204.7 602.3 1203.7 604.6z" fill="#cc6633"/>
<rect x="1182.4" y="622.3" width="5.2" height="5.2" fill="#f9c794"/><circle cx="1185.0" cy="620.0" r="2.45" fill="#d19f6d"/><circle cx="1189.9" cy="624.9" r="2.45" fill="#d19f6d"/><circle cx="1185.0" cy="629.8" r="2.45" fill="#d19f6d"/><circle cx="1180.1" cy="624.9" r="2.45" fill="#d19f6d"/>
</g>
<path d="M1418 229L1422.5 224.5L1427 229" fill="none" stroke="#484848" stroke-width="1.9"/>
<path d="M1418 616.5L1422.5 621L1427 616.5" fill="none" stroke="#484848" stroke-width="1.9"/>
<path d="M1417.2 968L1422.5 962.7L1427.8 968" fill="none" stroke="#b8b8b8" stroke-width="1.5"/>
<path d="M1417.2 1050L1422.5 1055.3L1427.8 1050" fill="none" stroke="#b8b8b8" stroke-width="1.5"/>
</svg>
<svg width="1609" height="1130" viewBox="0 0 1609 1130" style="left:0;top:0" fill="none" stroke-linejoin="round" shape-rendering="crispEdges">
<!-- YOKE -->
<g stroke-width="1">
<path d="M257.300 216.600C275 216.600 289 210.500 299 201L300.900 189.800L312 181.400H315.100L389.700 198.500L396.600 209.700L391.600 232.100L390.300 244.500L391 262.500L381.600 273.400H257.300" stroke="#000"/>
<path d="M257.300 216.600V273.400" stroke="#3f7fe0"/>
<path d="M308.600 205.700L386 222.500" stroke="#777"/>
<path d="M257.300 225.300H271C285 222.500 298 216 308.600 205.700L310.800 190.500L387.600 207.600L381 235.800L381.600 263.200H257.300" stroke="#990000"/>
</g>
<!-- BACK -->
<g stroke-width="1">
<path d="M135.200 707.400V330.100" stroke="#555"/>
<path d="M135.200 330.100H274.600L284.400 340.700L283.500 347.200L282.600 363.900L284.400 377.800C286 384 288 387 290.900 389.900C294 394.500 297.500 398 302.100 401C307 403.800 312 405.500 317 406.600L324.800 416.300V636.300L314.700 646C309 646.300 304 646.500 299.100 647.400C289 649.500 281.500 653.500 275.800 659.700C270 666 266 673.500 260.200 681.100C255 687.800 249.500 693.500 242.700 697.600C235 702 226 705.500 216.400 707H135.200" stroke="#000"/>
<path d="M150.700 330.100V707.400" stroke="#3f7fe0"/>
<path d="M135.200 340.100H274.600V350.900L272.700 363.900L274.200 375C275.500 380.500 277.500 385.500 279.800 389.900C283.500 396.500 288.500 402 294.700 406.600C300.500 410.800 307.500 414 314.700 415.900V637.300L303 637.700C294 638.800 286.500 641.500 279.700 646C273.500 650 268.500 654.500 264.100 659.700C260 664.800 257.500 670 254.300 675.200C250 681.500 244 686 236.800 689.800C229 693.800 220.500 696.800 211.500 698.200H135.200" stroke="#006400"/>
<path d="M271.800 363.400H275M273.300 361.900V364.900" stroke="#777" stroke-width=".8"/>
<g stroke="#707070" stroke-width=".85" shape-rendering="geometricPrecision">
<path d="M209.600 449.700V636.300"/>
<path d="M209.600 449.700C207 490 205.200 520 205.200 546.700C205.200 575 207.500 610 209.600 636.300C211.700 610 214 575 214 546.700C214 520 212.200 490 209.600 449.700z"/>
</g>
</g>
<!-- FRONT -->
<g stroke-width="1">
<path d="M487.400 636.500V416.400L495.200 406.300C502 404.500 508 402 513.100 398.500C517.500 395.500 520.500 391.500 522.800 386.800C524.500 383.200 525.600 379.500 526.300 375.200L528.300 351.800V326.500L525.800 310.900L533.600 298.800L609.500 283.200L620.200 288.500L625.100 297.300C628.500 302 632.500 306 637.700 308.900C642.500 311.800 648 314 654.300 315.200H687.400L696.600 324.100V667.700L686.400 677.400H596.800C590 676.800 583.500 675.500 577.400 673.500C570.500 671.500 564 669 557.900 665.700C551 662 545 657.500 538.400 654C531 650.500 523 648.500 515 647.600L497.500 646.200L487.400 636.500z" stroke="#000"/>
<path d="M497.500 637.100V416C503 414.500 508.500 412.300 513.100 409.200C518.500 405.500 523 400.500 526.700 394.600C529.800 389.800 532.500 384.800 534.500 379C536 373.500 536.800 367.500 537.400 361.500L538.800 347.900L538.400 330.400L535.500 307.400L612 292.400L619.200 305C623 310 628 314.500 633.800 317.700C639 320.700 645 323 651.400 324.100L686.400 324.500V667.300L593 667.100C586 666.300 579.800 664.500 573.500 661.800C568 659.500 563 656.500 557.900 653.100C550.500 648.500 543 645 534.500 642.300C527 640 519 638.200 511.200 637.500L497.500 637.100z" stroke="#1a1a96"/>
<path d="M661.700 324.500V667.300" stroke="#4a8ae8"/>
<path d="M669.300 324.500V667.300" stroke="#707070"/>
<path d="M630.900 545.400H661.100" stroke="#707070"/>
<rect x="535.200" y="365.200" width="2.600" height="2.600" stroke="#777" stroke-width=".8" fill="#ccc"/>
<g stroke="#707070" stroke-width=".85" shape-rendering="geometricPrecision">
<path d="M604.200 446.200V591.700"/>
<path d="M604.200 446.200C602 480 600.300 510 600.300 534.300C600.300 555 602.200 575 604.100 591.700C606 575 607.900 555 607.900 534.300C607.900 510 606.400 480 604.200 446.200z"/>
</g>
</g>
<!-- COLLAR -->
<g stroke-width="1">
<path d="M63.500 915.500L202.300 910.700L211.400 922.200L196.200 969.400L183.800 974.400L134.800 961.400H63.500" stroke="#000"/>
<path d="M63.500 915.500V961.400" stroke="#3f7fe0"/>
<path d="M63.500 923.700H91.300L203.400 918.900L187.500 966.100C170 959 150 953.500 132.700 952.600H63.500" stroke="#9932cc"/>
<path d="M114.800 952.200H117.800M116.300 950.700V953.700" stroke="#666" stroke-width="1"/>
</g>
<!-- COLLAR BAND -->
<g stroke-width="1">
<path d="M241.400 931.300H311C328 930.500 344 928 358.900 925.500H369.800C377.500 926.500 381.800 931 382.800 936.800C383.800 940 384.200 943 383.900 945.500C383 950 380.500 953 376.300 954.600C356 959 334 962 311 963.300H241.400" stroke="#000"/>
<path d="M241.400 931.300V963.300" stroke="#3f7fe0"/>
<path d="M241.400 940.500H311C329 939.500 346 936.800 363.200 933.900C370 934.500 373.500 937.500 374.100 941.100V946.100L365.400 947.600C347 951 329 953.500 311 954.600H241.400" stroke="#990000"/>
<path d="M363.900 933.500L366.500 947.600" stroke="#3f7fe0"/>
<path d="M292.400 940.500H294.800M293.600 939.300V941.900" stroke="#666"/>
<rect x="292.100" y="953.300" width="3" height="3" fill="#808080"/>
</g>
<!-- SLEEVE -->
<g stroke-width="1">
<path d="M433.400 877.900L437.700 871.400C442 870.500 446 869 449 867.100C456 862 462.500 855 468.800 848.700C474 843.500 479.500 839 485.800 836C492 832.800 498.500 830.900 505.600 830.900C512.500 830.900 519.500 832.800 525.400 836C532 839.800 537 845.500 542.400 851.600C548 858 553 863.500 559.400 867.100C564 869.500 569.500 870.800 575 871.400L580.700 877.900L548.100 1045.500L542.400 1049.800H471.600L466.500 1045.500z" stroke="#000"/>
<path d="M439.900 876.200C443.500 875.500 447 874.500 450.400 872.800C458 868.500 465 861.500 471.600 855.200C477 850 482.500 845 488.600 841.600C494 838.800 499.500 837.400 505.600 837.400C512 837.400 518.500 838.800 524 841.600C530 845 535 850.500 539.600 855.800C545.500 862.500 552 868.800 559.400 872.800C564 875 569 876 574.400 876.200L542.400 1044.100H471.600z" stroke="#1b7a1b"/>
<path d="M505.600 854.400V1035.600M504.100 856.400L505.600 854.400L507.100 856.400M504.100 1033.600L505.600 1035.600L507.100 1033.600" stroke="#3f6fe0"/>
<path d="M489.500 1017.800V1045.500" stroke="#808080"/>
<path d="M489.500 1031V1045.500" stroke="#808080" stroke-width="2.400"/>
<rect x="470" y="851.800" width="2.400" height="2.400" fill="#808080"/>
<rect x="541.200" y="858.200" width="2.600" height="2.600" fill="#808080"/>
</g>
<!-- PLACKET -->
<g stroke-width="1">
<rect x="585.200" y="991.200" width="22.700" height="62" stroke="#000"/>
<rect x="591.200" y="996" width="10.700" height="51.800" stroke="#9932cc"/>
<path d="M593.400 996V1047.800M599.700 996V1047.800" stroke="#777" stroke-width=".8"/>
<path d="M593.400 1029.100L601.100 1021.500M593.400 1026.800V1029.100H595.700M598.800 1021.500H601.100V1023.800" stroke="#3f6fe0"/>
</g>
<!-- CUFF -->
<g stroke-width="1">
<path d="M694.200 1025.200H782.600V1041.500C782.600 1048 778 1053.200 772 1053.200H704.500C698.500 1053.200 694.200 1048 694.200 1043z" stroke="#000"/>
<path d="M699.300 1030.300H777.500V1042.500C777.500 1045.500 775.500 1047.800 772.500 1047.800H704.300C701.300 1047.800 699.300 1045.500 699.300 1042.500z" stroke="#990000"/>
<path d="M767.600 1030.300V1047.800" stroke="#666"/>
</g>
</svg>

<svg width="1609" height="1130" viewBox="0 0 1609 1130" style="left:0;top:0" font-family="DejaVu Sans, Liberation Sans, sans-serif" fill="#8e8e8e">
<text x="302.3" y="231.8" font-size="2.3" textLength="12.5" lengthAdjust="spacingAndGlyphs">Pattern: Yoke</text><text x="302.3" y="236.8" font-size="2.3" textLength="21" lengthAdjust="spacingAndGlyphs">Chart: Sample_Women</text><text x="302.3" y="240.8" font-size="2.3" textLength="14" lengthAdjust="spacingAndGlyphs">Style: T1102-W</text><text x="302.3" y="244.9" font-size="2.3" textLength="14.5" lengthAdjust="spacingAndGlyphs">Date: 6/30/2020</text>
<text x="179.8" y="414.7" font-size="2.3" textLength="13" lengthAdjust="spacingAndGlyphs">Pattern: Back</text><text x="179.8" y="418.8" font-size="2.3" textLength="22" lengthAdjust="spacingAndGlyphs">Chart: Sample_Women</text><text x="179.8" y="423.5" font-size="2.3" textLength="14.5" lengthAdjust="spacingAndGlyphs">Style: T1102-W</text><text x="179.8" y="427.7" font-size="2.3" textLength="15" lengthAdjust="spacingAndGlyphs">Date: 6/30/2020</text>
<text x="599" y="415" font-size="2.3" textLength="12.5" lengthAdjust="spacingAndGlyphs">Pattern: Front</text><text x="599" y="419.1" font-size="2.3" textLength="21" lengthAdjust="spacingAndGlyphs">Chart: Sample_Women</text><text x="599" y="424" font-size="2.3" textLength="14" lengthAdjust="spacingAndGlyphs">Style: T1102-W</text><text x="599" y="427.9" font-size="2.3" textLength="14.6" lengthAdjust="spacingAndGlyphs">Date: 6/30/2020</text><text x="599" y="431.9" font-size="2.3" textLength="17.5" lengthAdjust="spacingAndGlyphs">Property of Designer</text>
<text x="599" y="441" font-size="1.9" textLength="11.7" lengthAdjust="spacingAndGlyphs">Add Seam Allowance</text><text x="599" y="443.1" font-size="1.9" textLength="11" lengthAdjust="spacingAndGlyphs">Apply Ease Values</text>
<text x="77" y="930.7" font-size="2.3" textLength="24" lengthAdjust="spacingAndGlyphs">Pattern: Dress Shirt Collar</text><text x="77" y="934.9" font-size="2.3" textLength="21.5" lengthAdjust="spacingAndGlyphs">Chart: Sample_Women</text><text x="77" y="938.8" font-size="2.3" textLength="14" lengthAdjust="spacingAndGlyphs">Style: T1102-W</text><text x="77" y="942.9" font-size="2.3" textLength="14.6" lengthAdjust="spacingAndGlyphs">Date: 6/30/2020</text>
<text x="254.5" y="943.6" font-size="2.3" textLength="19.6" lengthAdjust="spacingAndGlyphs">Pattern: Collar Band</text><text x="254.5" y="947.9" font-size="2.3" textLength="21.5" lengthAdjust="spacingAndGlyphs">Chart: Sample_Women</text><text x="254.5" y="951.8" font-size="2.3" textLength="14" lengthAdjust="spacingAndGlyphs">Style: T1102-W</text><text x="254.5" y="955.5" font-size="2.3" textLength="14" lengthAdjust="spacingAndGlyphs">Date: 6/30/2020</text>
<text x="496.6" y="862.4" font-size="1.2" textLength="9.6" lengthAdjust="spacingAndGlyphs">Pattern: Sleeve</text><text x="496.6" y="864.4" font-size="1.2" textLength="10.5" lengthAdjust="spacingAndGlyphs">Chart: Sample_Women</text><text x="496.6" y="867.5" font-size="1.2" textLength="7" lengthAdjust="spacingAndGlyphs">Style: T1102-W</text><text x="496.6" y="869.5" font-size="1.2" textLength="7" lengthAdjust="spacingAndGlyphs">Date: 6/30/2020</text>
<text x="715.8" y="1038.3" font-size="1.2" textLength="8" lengthAdjust="spacingAndGlyphs">Pattern: Cuff</text><text x="715.8" y="1041.7" font-size="1.2" textLength="11.6" lengthAdjust="spacingAndGlyphs">Chart: Sample_Women</text><text x="715.8" y="1043.7" font-size="1.2" textLength="7.5" lengthAdjust="spacingAndGlyphs">Style: T1102-W</text><text x="715.8" y="1045.7" font-size="1.2" textLength="7.5" lengthAdjust="spacingAndGlyphs">Date: 6/30/2020</text>
<text transform="translate(66.2 938.5) rotate(-90)" font-size="1.7" textLength="7" lengthAdjust="spacingAndGlyphs">Place on Fold</text>
<text transform="translate(243.8 949) rotate(-90)" font-size="1.7" textLength="7" lengthAdjust="spacingAndGlyphs">Place on Fold</text>
<text transform="translate(364 948) rotate(-90)" font-size="1.7" textLength="7" lengthAdjust="spacingAndGlyphs">Place on Fold</text>
<text x="593.6" y="1039.6" font-size="1.1" textLength="3.4" lengthAdjust="spacingAndGlyphs">Placket</text>
</svg>
<svg width="1609" height="1130" viewBox="0 0 1609 1130" style="left:0;top:0" fill="none" stroke="#000" stroke-width="1" stroke-linejoin="round" stroke-linecap="butt" shape-rendering="crispEdges">
<!-- FRONT FLAT -->
<g>
<!-- collar -->
<path d="M968.300 660.400C970 656.500 978 655 987.700 655C997.400 655 1005.500 656.500 1007.400 660.400"/>
<path d="M969.300 661.500C975 658.300 1000.500 658.300 1006.400 661.500"/>
<path d="M971.500 666.300C979 664.300 996.500 664.300 1004 666.300"/>
<path d="M969.800 660.800C969.500 670 978 677 987.700 677.300C997.400 677 1006 670 1005.700 660.800"/>
<path d="M968.300 660.400C966.500 665 964 668.500 961 670.900L974.700 690.200L976.700 689L979.600 682.200"/>
<path d="M1007.400 660.400C1009.200 665 1012 668.500 1015.100 670.900L1001.400 690.200L999.500 689L994.100 681.800"/>
<path d="M981.500 681.800C983.500 677.600 992 677.600 994.100 681.800"/>
<path d="M981.300 682.600C985 684 990.500 684 994.100 682.300" stroke="#1a1a96"/>
<!-- shoulders & sleeves -->
<path d="M961 670.900C953 675 945 678 937.600 679.700C932 681 928.500 684.500 927.100 687.800L878.600 875.300L879.400 882.600"/>
<path d="M1015.100 670.900C1023 675 1031 678 1037.800 679.700C1043.500 681 1047.500 684.500 1049.100 687.800L1098.400 877.800L1096.700 882.600"/>
<path d="M926.300 691.100C933 703 940.500 716 943.200 729"/>
<path d="M1049.800 691.100C1043 703 1035.700 716 1033 729"/>
<path d="M940 707.500C940 705 941.500 705 941.800 707.500C942.800 717 943.800 727 943.700 740C943.600 760 942.800 772 942.400 780L933.500 872.100L932.400 879.400"/>
<path d="M1036.200 707.500C1036.200 705 1034.700 705 1034.400 707.500C1033.400 717 1032.400 727 1032.500 740C1032.600 760 1033.300 772 1033.700 780L1042.600 872.100L1043.600 879.400"/>
<path d="M943.200 741C942 758 939.500 770 937.600 780C930 820 918 855 906.900 886.700L902.800 890.700"/>
<path d="M1033 741C1034.200 758 1036.700 770 1038.600 780C1046 820 1059 855 1070.100 886.700L1073.300 890.700"/>
<!-- cuffs -->
<path d="M879.400 882.600C888 884 896 887 902.800 890.700L898.800 903.600C891 904.500 882 900 875.400 895.500z"/>
<path d="M876 896.400C883 898.500 891 902 898.500 902.800"/>
<path d="M1096.700 882.600C1088 884 1080 887 1073.300 890.700L1076.500 903.600C1085 904.500 1094 900 1100 895.500z"/>
<path d="M1099.400 896.400C1092.500 898.500 1084.500 902 1077 902.800"/>
<!-- hems -->
<path d="M933.500 872.100C950 876 965 885 980.400 887.500M994.100 887.500C1010 885 1026 876 1042.600 872.100"/>
<path d="M932.400 879.400C941 881 947 884 952.100 889.900C960 900 972 907.500 987.700 907.700C1003 907.500 1015 900 1023.200 889.900C1028 884 1035 881 1043.600 879.400"/>
<!-- placket -->
<path d="M979.900 681.800V888" stroke-width="1.700" stroke-linecap="butt"/>
<path d="M993.800 682.500V888M979.900 888H993.800"/>
<g stroke-width="1">
<circle cx="987.700" cy="691.500" r="2.700"/><path d="M982 691.500H989.500"/>
<circle cx="987.700" cy="720.600" r="2.700"/><path d="M982 720.600H989.500"/>
<circle cx="987.700" cy="749.700" r="2.700"/><path d="M982 749.700H989.500"/>
<circle cx="987.700" cy="779.100" r="2.700"/><path d="M982 779.100H989.500"/>
<circle cx="987.700" cy="808.800" r="2.700"/><path d="M982 808.800H989.500"/>
<circle cx="987.700" cy="837.400" r="2.700"/><path d="M982 837.400H989.500"/>
<circle cx="987.700" cy="867.700" r="2.700"/><path d="M982 867.700H989.500"/>
</g>
</g>
<!-- BACK FLAT -->
<g>
<path d="M1275.700 656.300C1281 660.500 1287 661.600 1294.300 661.600C1301.500 661.600 1308 660.500 1313.400 656.300"/>
<path d="M1275.700 656.300C1271 662 1266 666.500 1260.300 670C1271 676.500 1282 679.400 1294.300 679.400C1306.500 679.400 1318 676.500 1329 670C1323 666.500 1318 662 1313.400 656.300"/>
<path d="M1260.300 670C1254 673 1247 674.500 1241 675.700C1236 677 1232.500 681 1231.300 685.400L1182 877L1184.400 882.600"/>
<path d="M1329 670C1335 673 1342 674.500 1348.400 675.700C1353 677 1356.500 681 1357.300 685.400L1406.900 877L1404.200 882.600"/>
<path d="M1231.300 686C1239 700 1246 713 1249 725.800"/>
<path d="M1357.300 686C1350 700 1342.500 713 1339.500 725.800"/>
<path d="M1246.500 704.200L1245.800 701.600C1262 698.500 1278 697 1294.300 697C1310.500 697 1327 698.500 1342.800 701.600L1342 704.200"/>
<path d="M1247.400 703.200C1248.500 715 1249.500 725 1249.500 735C1249.500 755 1248.500 770 1247.700 780L1238.500 879.400"/>
<path d="M1341.500 703.200C1340.300 715 1339.400 725 1339.400 735C1339.400 755 1340.500 770 1341.500 780L1350.500 879.400"/>
<path d="M1249.200 738C1247.500 757 1245 770 1243.400 780C1236 820 1224 855 1211.900 886.700L1207.800 890.700"/>
<path d="M1339.800 738C1341.500 757 1344 770 1345.700 780C1353 820 1366 855 1378 886.700L1381.500 890.700"/>
<!-- cuffs -->
<path d="M1184.400 882.600C1193 884 1201 887 1207.800 890.700L1203.800 903.600C1196 904.500 1186 899.500 1179.500 895.100z"/>
<path d="M1180.300 896.200C1187.500 898.300 1196 902 1203.500 902.800"/>
<path d="M1185 882L1188.500 873C1189.300 871 1190.800 871.500 1190.300 873.500L1187.300 883"/>
<path d="M1404.200 882.600C1395.500 884 1388 887 1381.500 890.700L1384.800 903.600C1393 904.500 1402.500 899.500 1408.700 895.100z"/>
<path d="M1408 896.200C1400.800 898.300 1392.500 902 1385 902.800"/>
<path d="M1403.600 882L1400 873C1399.200 871 1397.700 871.500 1398.200 873.500L1401.300 883"/>
<!-- hem -->
<path d="M1238.500 879.400C1244 880 1248 881.500 1250.600 883.400C1255 886 1258 889.500 1260.300 892.300C1264.500 897 1269 901 1274.900 903.600C1281 906.500 1288 907.700 1294.300 907.700C1300.500 907.700 1307.500 906.500 1313.700 903.600C1319.500 901 1324 897 1328.200 892.300C1330.500 889.500 1333.500 886 1337.900 883.400C1341 881.500 1345 880 1350.500 879.400"/>
<!-- pleat -->
<path d="M1294.300 697.500V907.500"/>
<path d="M1293.500 706L1294.300 700L1295.100 706L1295.800 727H1292.800z" fill="#000" stroke-width=".5"/>
<path d="M1293.800 725.800L1290.700 780L1284.300 906M1294.800 725.800L1298.500 780L1304.800 906"/>
</g>
</svg>

<svg width="1609" height="1130" viewBox="0 0 1609 1130" style="left:0;top:0" fill="none" stroke-linejoin="round" stroke-linecap="round">
<defs><pattern id="plav" width="42.40" height="42.40" patternUnits="userSpaceOnUse" x="870" y="215"><rect x="0.00" y="0.00" width="6.00" height="6.00" fill="#adb0dc"/><rect x="0.00" y="5.30" width="6.00" height="6.00" fill="#a9acd9"/><rect x="0.00" y="10.60" width="6.00" height="6.00" fill="#969cd0"/><rect x="0.00" y="15.90" width="6.00" height="6.00" fill="#a3a7d7"/><rect x="0.00" y="21.20" width="6.00" height="6.00" fill="#adb0dc"/><rect x="0.00" y="26.50" width="6.00" height="6.00" fill="#b4b7e0"/><rect x="0.00" y="31.80" width="6.00" height="6.00" fill="#b4b7e0"/><rect x="0.00" y="37.10" width="6.00" height="6.00" fill="#b4b7e0"/><rect x="5.30" y="0.00" width="6.00" height="6.00" fill="#a9acd9"/><rect x="5.30" y="5.30" width="6.00" height="6.00" fill="#adb0dc"/><rect x="5.30" y="10.60" width="6.00" height="6.00" fill="#adb0dc"/><rect x="5.30" y="15.90" width="6.00" height="6.00" fill="#a9acd9"/><rect x="5.30" y="21.20" width="6.00" height="6.00" fill="#adb0dc"/><rect x="5.30" y="26.50" width="6.00" height="6.00" fill="#adb0dc"/><rect x="5.30" y="31.80" width="6.00" height="6.00" fill="#a9acd9"/><rect x="5.30" y="37.10" width="6.00" height="6.00" fill="#a3a7d7"/><rect x="10.60" y="0.00" width="6.00" height="6.00" fill="#adb0dc"/><rect x="10.60" y="5.30" width="6.00" height="6.00" fill="#b4b7e0"/><rect x="10.60" y="10.60" width="6.00" height="6.00" fill="#b4b7e0"/><rect x="10.60" y="15.90" width="6.00" height="6.00" fill="#a9acd9"/><rect x="10.60" y="21.20" width="6.00" height="6.00" fill="#a9acd9"/><rect x="10.60" y="26.50" width="6.00" height="6.00" fill="#a9acd9"/><rect x="10.60" y="31.80" width="6.00" height="6.00" fill="#a3a7d7"/><rect x="10.60" y="37.10" width="6.00" height="6.00" fill="#a3a7d7"/><rect x="15.90" y="0.00" width="6.00" height="6.00" fill="#a3a7d7"/><rect x="15.90" y="5.30" width="6.00" height="6.00" fill="#adb0dc"/><rect x="15.90" y="10.60" width="6.00" height="6.00" fill="#b4b7e0"/><rect x="15.90" y="15.90" width="6.00" height="6.00" fill="#adb0dc"/><rect x="15.90" y="21.20" width="6.00" height="6.00" fill="#a9acd9"/><rect x="15.90" y="26.50" width="6.00" height="6.00" fill="#adb0dc"/><rect x="15.90" y="31.80" width="6.00" height="6.00" fill="#adb0dc"/><rect x="15.90" y="37.10" width="6.00" height="6.00" fill="#a3a7d7"/><rect x="21.20" y="0.00" width="6.00" height="6.00" fill="#9da2d4"/><rect x="21.20" y="5.30" width="6.00" height="6.00" fill="#a3a7d7"/><rect x="21.20" y="10.60" width="6.00" height="6.00" fill="#b4b7e0"/><rect x="21.20" y="15.90" width="6.00" height="6.00" fill="#babde5"/><rect x="21.20" y="21.20" width="6.00" height="6.00" fill="#b4b7e0"/><rect x="21.20" y="26.50" width="6.00" height="6.00" fill="#adb0dc"/><rect x="21.20" y="31.80" width="6.00" height="6.00" fill="#a9acd9"/><rect x="21.20" y="37.10" width="6.00" height="6.00" fill="#a3a7d7"/><rect x="26.50" y="0.00" width="6.00" height="6.00" fill="#a3a7d7"/><rect x="26.50" y="5.30" width="6.00" height="6.00" fill="#a9acd9"/><rect x="26.50" y="10.60" width="6.00" height="6.00" fill="#b4b7e0"/><rect x="26.50" y="15.90" width="6.00" height="6.00" fill="#babde5"/><rect x="26.50" y="21.20" width="6.00" height="6.00" fill="#b4b7e0"/><rect x="26.50" y="26.50" width="6.00" height="6.00" fill="#a3a7d7"/><rect x="26.50" y="31.80" width="6.00" height="6.00" fill="#a3a7d7"/><rect x="26.50" y="37.10" width="6.00" height="6.00" fill="#a9acd9"/><rect x="31.80" y="0.00" width="6.00" height="6.00" fill="#b4b7e0"/><rect x="31.80" y="5.30" width="6.00" height="6.00" fill="#adb0dc"/><rect x="31.80" y="10.60" width="6.00" height="6.00" fill="#a9acd9"/><rect x="31.80" y="15.90" width="6.00" height="6.00" fill="#a9acd9"/><rect x="31.80" y="21.20" width="6.00" height="6.00" fill="#a9acd9"/><rect x="31.80" y="26.50" width="6.00" height="6.00" fill="#a3a7d7"/><rect x="31.80" y="31.80" width="6.00" height="6.00" fill="#a9acd9"/><rect x="31.80" y="37.10" width="6.00" height="6.00" fill="#b4b7e0"/><rect x="37.10" y="0.00" width="6.00" height="6.00" fill="#babde5"/><rect x="37.10" y="5.30" width="6.00" height="6.00" fill="#a9acd9"/><rect x="37.10" y="10.60" width="6.00" height="6.00" fill="#969cd0"/><rect x="37.10" y="15.90" width="6.00" height="6.00" fill="#9da2d4"/><rect x="37.10" y="21.20" width="6.00" height="6.00" fill="#a9acd9"/><rect x="37.10" y="26.50" width="6.00" height="6.00" fill="#adb0dc"/><rect x="37.10" y="31.80" width="6.00" height="6.00" fill="#b4b7e0"/><rect x="37.10" y="37.10" width="6.00" height="6.00" fill="#c2c5ea"/></pattern><pattern id="pblu" width="42.40" height="42.40" patternUnits="userSpaceOnUse" x="870" y="215"><rect x="0.00" y="0.00" width="6.00" height="6.00" fill="#6f99d3"/><rect x="0.00" y="5.30" width="6.00" height="6.00" fill="#6f99d3"/><rect x="0.00" y="10.60" width="6.00" height="6.00" fill="#6a92d0"/><rect x="0.00" y="15.90" width="6.00" height="6.00" fill="#74a0d8"/><rect x="0.00" y="21.20" width="6.00" height="6.00" fill="#7ea9de"/><rect x="0.00" y="26.50" width="6.00" height="6.00" fill="#74a0d8"/><rect x="0.00" y="31.80" width="6.00" height="6.00" fill="#6a92d0"/><rect x="0.00" y="37.10" width="6.00" height="6.00" fill="#6f99d3"/><rect x="5.30" y="0.00" width="6.00" height="6.00" fill="#6f99d3"/><rect x="5.30" y="5.30" width="6.00" height="6.00" fill="#7ea9de"/><rect x="5.30" y="10.60" width="6.00" height="6.00" fill="#7ea9de"/><rect x="5.30" y="15.90" width="6.00" height="6.00" fill="#8fb5e6"/><rect x="5.30" y="21.20" width="6.00" height="6.00" fill="#7ea9de"/><rect x="5.30" y="26.50" width="6.00" height="6.00" fill="#6f99d3"/><rect x="5.30" y="31.80" width="6.00" height="6.00" fill="#8497d2"/><rect x="5.30" y="37.10" width="6.00" height="6.00" fill="#8497d2"/><rect x="10.60" y="0.00" width="6.00" height="6.00" fill="#74a0d8"/><rect x="10.60" y="5.30" width="6.00" height="6.00" fill="#a3c4ee"/><rect x="10.60" y="10.60" width="6.00" height="6.00" fill="#8fb5e6"/><rect x="10.60" y="15.90" width="6.00" height="6.00" fill="#74a0d8"/><rect x="10.60" y="21.20" width="6.00" height="6.00" fill="#6f99d3"/><rect x="10.60" y="26.50" width="6.00" height="6.00" fill="#6f99d3"/><rect x="10.60" y="31.80" width="6.00" height="6.00" fill="#7795d2"/><rect x="10.60" y="37.10" width="6.00" height="6.00" fill="#7795d2"/><rect x="15.90" y="0.00" width="6.00" height="6.00" fill="#6f99d3"/><rect x="15.90" y="5.30" width="6.00" height="6.00" fill="#74a0d8"/><rect x="15.90" y="10.60" width="6.00" height="6.00" fill="#74a0d8"/><rect x="15.90" y="15.90" width="6.00" height="6.00" fill="#6a92d0"/><rect x="15.90" y="21.20" width="6.00" height="6.00" fill="#6a92d0"/><rect x="15.90" y="26.50" width="6.00" height="6.00" fill="#74a0d8"/><rect x="15.90" y="31.80" width="6.00" height="6.00" fill="#74a0d8"/><rect x="15.90" y="37.10" width="6.00" height="6.00" fill="#6f99d3"/><rect x="21.20" y="0.00" width="6.00" height="6.00" fill="#6a92d0"/><rect x="21.20" y="5.30" width="6.00" height="6.00" fill="#6a92d0"/><rect x="21.20" y="10.60" width="6.00" height="6.00" fill="#6f99d3"/><rect x="21.20" y="15.90" width="6.00" height="6.00" fill="#6f99d3"/><rect x="21.20" y="21.20" width="6.00" height="6.00" fill="#6f99d3"/><rect x="21.20" y="26.50" width="6.00" height="6.00" fill="#7ea9de"/><rect x="21.20" y="31.80" width="6.00" height="6.00" fill="#8fb5e6"/><rect x="21.20" y="37.10" width="6.00" height="6.00" fill="#74a0d8"/><rect x="26.50" y="0.00" width="6.00" height="6.00" fill="#6f99d3"/><rect x="26.50" y="5.30" width="6.00" height="6.00" fill="#6a92d0"/><rect x="26.50" y="10.60" width="6.00" height="6.00" fill="#74a0d8"/><rect x="26.50" y="15.90" width="6.00" height="6.00" fill="#74a0d8"/><rect x="26.50" y="21.20" width="6.00" height="6.00" fill="#6f99d3"/><rect x="26.50" y="26.50" width="6.00" height="6.00" fill="#6f99d3"/><rect x="26.50" y="31.80" width="6.00" height="6.00" fill="#7ea9de"/><rect x="26.50" y="37.10" width="6.00" height="6.00" fill="#7ea9de"/><rect x="31.80" y="0.00" width="6.00" height="6.00" fill="#7ea9de"/><rect x="31.80" y="5.30" width="6.00" height="6.00" fill="#6f99d3"/><rect x="31.80" y="10.60" width="6.00" height="6.00" fill="#6a92d0"/><rect x="31.80" y="15.90" width="6.00" height="6.00" fill="#6f99d3"/><rect x="31.80" y="21.20" width="6.00" height="6.00" fill="#6a92d0"/><rect x="31.80" y="26.50" width="6.00" height="6.00" fill="#6a92d0"/><rect x="31.80" y="31.80" width="6.00" height="6.00" fill="#74a0d8"/><rect x="31.80" y="37.10" width="6.00" height="6.00" fill="#8fb5e6"/><rect x="37.10" y="0.00" width="6.00" height="6.00" fill="#7ea9de"/><rect x="37.10" y="5.30" width="6.00" height="6.00" fill="#6a92d0"/><rect x="37.10" y="10.60" width="6.00" height="6.00" fill="#7795d2"/><rect x="37.10" y="15.90" width="6.00" height="6.00" fill="#6f99d3"/><rect x="37.10" y="21.20" width="6.00" height="6.00" fill="#6f99d3"/><rect x="37.10" y="26.50" width="6.00" height="6.00" fill="#6f99d3"/><rect x="37.10" y="31.80" width="6.00" height="6.00" fill="#74a0d8"/><rect x="37.10" y="37.10" width="6.00" height="6.00" fill="#8fb5e6"/></pattern><pattern id="pmix" width="42.40" height="42.40" patternUnits="userSpaceOnUse" x="870" y="215"><rect x="0.00" y="0.00" width="6.00" height="6.00" fill="#8b9ad3"/><rect x="0.00" y="5.30" width="6.00" height="6.00" fill="#8399d3"/><rect x="0.00" y="10.60" width="6.00" height="6.00" fill="#7b9ad4"/><rect x="0.00" y="15.90" width="6.00" height="6.00" fill="#8399d3"/><rect x="0.00" y="21.20" width="6.00" height="6.00" fill="#959dd5"/><rect x="0.00" y="26.50" width="6.00" height="6.00" fill="#8399d3"/><rect x="0.00" y="31.80" width="6.00" height="6.00" fill="#8399d3"/><rect x="0.00" y="37.10" width="6.00" height="6.00" fill="#8b9ad3"/><rect x="5.30" y="0.00" width="6.00" height="6.00" fill="#959dd5"/><rect x="5.30" y="5.30" width="6.00" height="6.00" fill="#959dd5"/><rect x="5.30" y="10.60" width="6.00" height="6.00" fill="#8b9ad3"/><rect x="5.30" y="15.90" width="6.00" height="6.00" fill="#8399d3"/><rect x="5.30" y="21.20" width="6.00" height="6.00" fill="#8399d3"/><rect x="5.30" y="26.50" width="6.00" height="6.00" fill="#8399d3"/><rect x="5.30" y="31.80" width="6.00" height="6.00" fill="#7b9ad4"/><rect x="5.30" y="37.10" width="6.00" height="6.00" fill="#8399d3"/><rect x="10.60" y="0.00" width="6.00" height="6.00" fill="#8399d3"/><rect x="10.60" y="5.30" width="6.00" height="6.00" fill="#959dd5"/><rect x="10.60" y="10.60" width="6.00" height="6.00" fill="#8399d3"/><rect x="10.60" y="15.90" width="6.00" height="6.00" fill="#8399d3"/><rect x="10.60" y="21.20" width="6.00" height="6.00" fill="#8b9ad3"/><rect x="10.60" y="26.50" width="6.00" height="6.00" fill="#8b9ad3"/><rect x="10.60" y="31.80" width="6.00" height="6.00" fill="#8399d3"/><rect x="10.60" y="37.10" width="6.00" height="6.00" fill="#7b9ad4"/><rect x="15.90" y="0.00" width="6.00" height="6.00" fill="#7399d3"/><rect x="15.90" y="5.30" width="6.00" height="6.00" fill="#8399d3"/><rect x="15.90" y="10.60" width="6.00" height="6.00" fill="#959dd5"/><rect x="15.90" y="15.90" width="6.00" height="6.00" fill="#959dd5"/><rect x="15.90" y="21.20" width="6.00" height="6.00" fill="#959dd5"/><rect x="15.90" y="26.50" width="6.00" height="6.00" fill="#a0a5d8"/><rect x="15.90" y="31.80" width="6.00" height="6.00" fill="#8b9ad3"/><rect x="15.90" y="37.10" width="6.00" height="6.00" fill="#7399d3"/><rect x="21.20" y="0.00" width="6.00" height="6.00" fill="#6f99d3"/><rect x="21.20" y="5.30" width="6.00" height="6.00" fill="#8399d3"/><rect x="21.20" y="10.60" width="6.00" height="6.00" fill="#a0a5d8"/><rect x="21.20" y="15.90" width="6.00" height="6.00" fill="#a0a5d8"/><rect x="21.20" y="21.20" width="6.00" height="6.00" fill="#8b9ad3"/><rect x="21.20" y="26.50" width="6.00" height="6.00" fill="#8b9ad3"/><rect x="21.20" y="31.80" width="6.00" height="6.00" fill="#8399d3"/><rect x="21.20" y="37.10" width="6.00" height="6.00" fill="#7399d3"/><rect x="26.50" y="0.00" width="6.00" height="6.00" fill="#8b9ad3"/><rect x="26.50" y="5.30" width="6.00" height="6.00" fill="#8b9ad3"/><rect x="26.50" y="10.60" width="6.00" height="6.00" fill="#a0a5d8"/><rect x="26.50" y="15.90" width="6.00" height="6.00" fill="#8b9ad3"/><rect x="26.50" y="21.20" width="6.00" height="6.00" fill="#7b9ad4"/><rect x="26.50" y="26.50" width="6.00" height="6.00" fill="#7b9ad4"/><rect x="26.50" y="31.80" width="6.00" height="6.00" fill="#8399d3"/><rect x="26.50" y="37.10" width="6.00" height="6.00" fill="#8b9ad3"/><rect x="31.80" y="0.00" width="6.00" height="6.00" fill="#959dd5"/><rect x="31.80" y="5.30" width="6.00" height="6.00" fill="#8399d3"/><rect x="31.80" y="10.60" width="6.00" height="6.00" fill="#7b9ad4"/><rect x="31.80" y="15.90" width="6.00" height="6.00" fill="#7b9ad4"/><rect x="31.80" y="21.20" width="6.00" height="6.00" fill="#7b9ad4"/><rect x="31.80" y="26.50" width="6.00" height="6.00" fill="#8399d3"/><rect x="31.80" y="31.80" width="6.00" height="6.00" fill="#959dd5"/><rect x="31.80" y="37.10" width="6.00" height="6.00" fill="#b0b4de"/><rect x="37.10" y="0.00" width="6.00" height="6.00" fill="#959dd5"/><rect x="37.10" y="5.30" width="6.00" height="6.00" fill="#7b9ad4"/><rect x="37.10" y="10.60" width="6.00" height="6.00" fill="#7399d3"/><rect x="37.10" y="15.90" width="6.00" height="6.00" fill="#7b9ad4"/><rect x="37.10" y="21.20" width="6.00" height="6.00" fill="#8399d3"/><rect x="37.10" y="26.50" width="6.00" height="6.00" fill="#8b9ad3"/><rect x="37.10" y="31.80" width="6.00" height="6.00" fill="#959dd5"/><rect x="37.10" y="37.10" width="6.00" height="6.00" fill="#a0a5d8"/></pattern></defs>
<g stroke="#45454d" stroke-width=".95">
<path d="M1000.7 403.700C999.500 430 1001 460 1002.500 485C1004 520 1005.500 560 1006.800 592.300"/>
<path d="M1003.500 412C1003.200 435 1004.200 460 1004.600 482"/>
<path d="M1028.800 422.800V536"/>
<path d="M1031.200 431.900C1034 455 1039 475 1041.800 493.500M1040 492L1043 496M1038.500 496L1042.500 499.500M1040.800 493.500C1036 510 1031.500 523 1029.100 536C1025.500 556 1022.500 575 1020.600 591.200"/>
<path d="M1057.500 403.700C1060 430 1065.500 462 1066.300 489.200C1066 503 1063.500 515 1060.900 527.500C1057 551 1053 573 1050.300 593.300"/>
<path d="M1059.900 517.900C1055 538 1050.500 560 1048.200 578.500"/>
<path d="M1056 404C1057.200 416 1058 423 1058.600 428"/>
<path d="M1006.800 592.300C1012 594 1017 593.500 1020.600 591.200C1030 594.500 1041 595 1050.300 593.300"/>
<path d="M1016.300 595.500L1014.200 609.300L1021.600 611.400L1024.800 595.500M1029.100 595.500L1030.200 612.400H1032.300L1033.400 596.500M1033.400 595.500L1049.300 608.200L1044 609.300L1034.400 598.700M1014.200 609.300L1016 610.500"/>
</g>
<path d="M1018.800 287.300L1037.900 286.800L1040.500 294.300L1056.400 302.200C1060 303.500 1063 305.500 1063.900 308.300L1068.100 350V361.200L1080.900 393.100L1084 403.700L1072.400 409L1066 397.300L1053.500 363L1057 382.500L1056.400 402.600C1056 407 1055 410.500 1053.300 413.300C1051.500 417 1049 419.500 1045.800 420.700L1022.500 422.300C1018 421 1014.500 419 1011.900 416.400C1008.500 412.500 1006.500 408 1005.500 403.700L1003.900 387.800L1006.500 340L1002.300 304.300L1015.600 294.800z" fill="url(#pmix)" stroke="none"/>
<path d="M1015.600 294.800L1018.800 287.300L1030 287L1031 340L1037.300 420.700L1022.500 422.300C1016 420 1010 414 1006 404L1006.500 340L1004 310z" fill="url(#pblu)" stroke="none" opacity=".75"/>
<path d="M1056.400 302.200C1060 303.500 1063 305.500 1063.900 308.300L1068.100 350V361.200L1080.900 393.100L1084 403.700L1072.400 409L1066 397.300L1052.700 361.200L1052.200 340L1053.300 317z" fill="url(#plav)" stroke="none" opacity=".55"/>
<path d="M1075.500 395.200L1080.900 393.300L1083.800 403.500L1078.700 405.800z" fill="#3044a8" stroke="none"/>
<g stroke="#45454d" stroke-width=".95">
<path d="M1018.800 287.300L1037.900 286.800L1040.500 294.300C1034 298.500 1022 298.500 1015.600 294.800z"/>
<path d="M1015.600 294.800L1002.300 304.300M1040.500 294.300L1056.400 302.200C1060 303.500 1063 305.500 1063.900 308.300L1068.100 350V361.200L1080.900 393.100L1084 403.700L1072.400 409L1066 397.300"/>
<path d="M1056.400 302.700L1053.300 317L1052.200 340L1053.300 361.200L1057 382.500L1056.400 402.600C1056 407 1055 410.500 1053.300 413.300C1051.500 417 1049 419.500 1045.800 420.700L1022.500 422.300C1018 421 1014.500 419 1011.900 416.400C1008.500 412.500 1006.500 408 1005.500 403.700L1003.900 387.800L1006.500 340"/>
<path d="M1010.800 318.100L1053.300 317"/>
<path d="M1027.800 318.100L1026.700 340L1024.100 422.300M1027.800 318.100L1031 340L1037.300 420.700"/>
<path d="M1052.700 361.200L1066 397.300M1066 397.300L1080.900 393.100M1055 370L1063 392" />
<path d="M1062.500 318V324" stroke-width="1.400"/><path d="M1066.500 353L1067.600 362" stroke-width="1.200"/><path d="M1071 388L1074 397" stroke-width="1.200"/>
<path d="M1074.500 410C1078 418 1082 424 1086.200 424.900C1084 420 1082 415.500 1081.500 412.500C1085 411.500 1088 414 1090 418L1093.600 431.800L1095.500 430.500L1094.500 420L1101 427L1100 420.500C1096 413 1090 407 1084 403.700"/>
</g>
<g stroke="#2e2e36" stroke-width="1">
<path d="M1018.800 287.300C1018.500 284 1017.500 282 1016.500 280M1037.900 286.800C1038 283.500 1039 281 1040.500 279"/>
<path d="M1007.100 270C1008 256 1012 246 1020 242C1030 237.500 1040 242 1044 252C1046.500 262 1045.500 275 1043.500 285"/>
<path d="M1009 268C1007.500 277 1010 285 1012.500 290M1011 262C1009 272 1011 281 1014.500 288"/>
<path d="M1024 241C1030 238 1036 239 1040 245C1043 251 1044.500 258 1044.500 266"/>
<path d="M1016 246C1012 254 1013 262 1016.500 268M1020 245C1017 252 1018 258 1021 263M1026 243C1023 249 1024 254 1027 258"/>
<path d="M1024 252C1027 249 1031 250 1031 254C1030.500 258 1025.500 258 1025 254.500C1025 252.500 1028 252 1028.500 254"/>
<path d="M1031 258C1036 262 1039 268 1039.500 275M1028 260C1031 266 1031.500 272 1030 278M1024 261C1022 268 1019 273 1015.500 276"/>
<path d="M1034 246C1039 252 1041.500 260 1041.500 268M1037 252C1040 259 1040.500 264 1040 270"/>
<path d="M1016.500 268C1019.500 275 1024 280 1030 282M1041.500 262C1042.500 270 1041 278 1037.500 283M1013.500 272C1016 279 1020 283 1024 285"/>
<path d="M1020 266C1023 272 1028 276 1033 277M1034 268C1036 273 1035.500 278 1033 282"/>
<path d="M1012 250C1015 246 1019 243.500 1023 243M1013.500 256C1016 250 1020 247 1025 246.500M1029 244C1033 246 1036 250 1037 255"/>
<path d="M1018 259C1020 255 1023 253 1026 253M1032 252C1035 255 1036 259 1035.500 263M1021 270C1024 267 1028 266 1032 267"/>
<path d="M1010.500 262L1008 274L1010 284M1043 258L1045 270L1044 284M1038 270C1037 276 1034 281 1030 284M1017 278C1019 282 1022 285 1026 286.500"/>
<path d="M1022 248C1026 250 1029 253 1030 257M1027 262C1030 265 1034 266 1038 265M1015 264C1017 262 1020 261 1023 262"/>
</g>
<g stroke="#45454d" stroke-width=".95">
<path d="M909.900 383.700C911 410 915 440 920.700 474.400C923.500 510 925 545 926 576.300L935.600 581.600"/>
<path d="M940.900 404.200C938 425 936 445 935.600 463.700C936 495 938 525 938.800 548.700C938 562 937.300 573 936.700 582.700"/>
<path d="M937.500 401.500L944.500 403.500M938.500 404.800L943.200 403"/>
<path d="M975.200 381.600C973.500 410 969 445 964.300 474.400C965.500 510 967 548 967.500 580.600"/>
<path d="M935.600 581.600C941 585.500 947 587.500 952.600 588C958.500 587.500 964 584.500 967.500 580.600"/>
<path d="M937.700 585.900C938.500 591 940.500 596 944.100 599.700C947.500 606.500 951.500 613 955.800 616.700C960 617.500 963.500 615.500 965.300 612.400C966.300 606 966.300 599 965.300 593.300M947.300 589L948.300 599.700M944.100 599.700C951 600.500 958.500 600 963.300 597.500"/>
<path d="M927.100 472.200L930.300 476.500M953.700 485L955.800 491.300M926.700 512.600L928.200 531.700M960 543.400L962.800 554"/>
</g>
<path d="M976.800 380.500L986.500 377L1001.200 392.200L992.700 402.800z" fill="url(#plav)" stroke="none"/>
<path d="M990.500 397.500L992.700 402.800L996 399z" fill="#4f62c0" stroke="none"/>
<path d="M936.900 275.800L933.700 275.800L914.600 284.300L912.500 286.400L909.300 330L908.300 341.200L896.600 378.400L891.900 388L904.600 393.300L909.400 382.600L913.100 371C915 376 917 380 919.500 383.700C922 388 925 391 927.900 393.300C933 396.500 939 398.500 944.900 399.600L943.300 330V278z" fill="url(#plav)" stroke="none"/>
<path d="M943.300 278L944.900 399.600C951 399.300 956.500 398.200 960.900 396.400C965.500 394 969 390.500 971.500 386.900C973.500 384 975 381.500 975.700 379.500L974.700 338L975.700 320L976.200 275.800L961.300 273.700L952.300 278z" fill="url(#pblu)" stroke="none"/>
<path d="M976.200 275.800L981.500 278L1001.200 304.300L1013.300 321.500L1013.900 324L1008.600 344.400L990.600 372L986.300 377.300L974.700 376.300L970.400 365.700L980 364.600L993.800 345.500L998 329.600L989.500 320L977.200 298.100z" fill="url(#plav)" stroke="none"/>
<path d="M976.200 275.800L981.500 278L1001.200 304.300L1013.300 321.500L1013.900 324L1008.600 344.400L990.600 372L986.300 377.300L974.700 376.300L970.400 365.700L980 364.600L993.800 345.500L998 329.600L989.500 320L977.200 298.100z" fill="#8a94d0" stroke="none" opacity=".5"/>
<path d="M905 352L909 340L907 372L902 386L896 382z" fill="#6d80cc" stroke="none" opacity=".55"/>
<path d="M953.900 266.300L961.300 273.700L960.200 281.700L950.700 275.800z" fill="#a9acd9" stroke="#111" stroke-width="1.500"/>
<g stroke="#45454d" stroke-width=".95">
<path d="M933.700 275.800L914.600 284.300L912.500 286.400L909.300 330L908.300 341.200L896.600 378.400L891.900 388L904.600 393.300L909.400 382.600L911 375.200L923.700 341.200L924.800 320"/>
<path d="M917.800 282.200C920 289 922.500 295 924.100 300.200L925.200 330L924 342"/>
<path d="M896.600 378.400L909.400 382.600M898 374.500L910.500 378.800"/>
<path d="M913.100 371C915 376 917 380 919.500 383.700C922 388 925 391 927.900 393.300C933 396.500 939 398.500 944.900 399.600C951 399.300 956.500 398.200 960.900 396.400C965.500 394 969 390.500 971.500 386.900C973.500 384 975 381.500 975.700 379.500"/>
<path d="M943.300 278L942.800 320L944.900 399.600M952.300 278L953.400 320L949.200 373.100L946 399.600"/>
<path d="M976.200 275.800L975.700 320L974.700 338L975.700 379.500"/>
<path d="M952.300 278L961.300 273.700L976.200 275.800L981.500 278L1001.200 304.300L1013.300 321.500L1013.900 324L1008.600 344.400L990.600 372L986.300 377.300L974.700 376.300L970.400 365.700"/>
<path d="M977.200 298.100L989.500 320L998 329.600L993.800 345.500L980 364.600L970.400 365.700"/>
<path d="M980 364.600L990.600 372M981.500 362L992 369.500"/>
<path d="M958.700 302.400H973.500V317.800H958.700z"/>
<path d="M936.900 275.800L928 277.500L917 284.500M936.900 275.800L940 279.500L943 276.500M936.900 275.800L932.500 279.200L936 281.500"/>
<path d="M976.800 380.500L992.700 402.800L1001.200 392.200L986.500 377M983 391L992.500 381.500M985 394L994.500 384.500"/>
<path d="M1001.200 392.200C1003 390 1004.500 389 1005.500 390.500C1004 392 1003.500 394 1004.500 396M1002.500 386V392"/>
<circle cx="949.1" cy="282.7" r="1.100" fill="#6b6f8f" stroke="none"/>
<circle cx="950.7" cy="296.5" r="1.100" fill="#6b6f8f" stroke="none"/>
<circle cx="951.2" cy="311.9" r="1.100" fill="#6b6f8f" stroke="none"/>
<circle cx="951.2" cy="326.2" r="1.100" fill="#6b6f8f" stroke="none"/>
<circle cx="950" cy="341" r="1.100" fill="#6b6f8f" stroke="none"/>
<circle cx="949" cy="356.5" r="1.100" fill="#6b6f8f" stroke="none"/>
<circle cx="946" cy="373" r="1.100" fill="#6b6f8f" stroke="none"/>
<circle cx="946.5" cy="288" r=".55" fill="#6b6f8f" stroke="none"/>
<circle cx="947" cy="303" r=".55" fill="#6b6f8f" stroke="none"/>
<circle cx="947" cy="318.5" r=".55" fill="#6b6f8f" stroke="none"/>
<circle cx="947.5" cy="333" r=".55" fill="#6b6f8f" stroke="none"/>
<circle cx="945.5" cy="348.5" r=".55" fill="#6b6f8f" stroke="none"/>
<circle cx="944" cy="365" r=".55" fill="#6b6f8f" stroke="none"/>
<circle cx="941.5" cy="382" r=".55" fill="#6b6f8f" stroke="none"/>
<circle cx="940" cy="390.5" r=".55" fill="#6b6f8f" stroke="none"/>
<path d="M891.900 389C886 396 879 405 873.300 413.400L874.500 414L883 406L881.200 417.100L882.500 417.300L886.500 405.500L888 412.700L890.800 412.400L891.500 400.500C895 399 898.500 397 900.900 394.300"/>
<path d="M970.400 365.700C964 364 957 364.500 952.500 366.500L950.200 369.900C956 368.500 962 368 966 369C960 370 954 372 950.800 375L952 377.500C957 374 963 372.500 967 372.500C962 375 958 378 955.500 381.500L956.600 385.800C960 381 965 377 970 375.500L974.700 376.300" fill="#fff"/>
</g>
<g stroke="#33333b" stroke-width="1">
<path d="M916.700 242.900C916 255 916.500 268 916.700 279"/>
<path d="M927.300 234.400C921 236.500 917.500 240 916.700 246"/>
<path d="M929 241.500C922 248 918.500 255 919 262C920 268 922 272 924.500 275.800"/>
<path d="M921.500 254C922.500 263 924.500 270 928 273.500C931 276 934 277.500 936.900 277C941 276 945 272 947 268"/>
<path d="M928 232.500C935 229.500 943 230 948 235C952 240 953.500 248 953.500 257"/>
<path d="M931 236C938 234 944 236 948 242C950 247 950.500 252 950 258"/>
<path d="M932 239C938 240 942 244.500 943.500 251C944.500 256 944 261 943 265"/>
<path d="M937.500 222.500C945 221 953 224 957 232C961 240 962.500 252 963.400 265.200"/>
<path d="M936 222C941 218 948 217 954.500 222M939 219.500C944 216.500 949.500 217 953 220"/>
<path d="M926.300 226C925.500 221 927 217.500 930 217.500C932 217.500 933.500 219 934 221.500"/>
<path d="M950.700 245C952.500 248 952 253 949.500 256.500M954.500 253C956 257 956.500 261 958 264L959 258L960.500 265"/>
<path d="M947.500 262.500L951 266"/>
</g>
</svg>
<span class="t " style="left:75.80px;top:23.60px;font-size:17.33px;line-height:22px;color:#212529;letter-spacing:0.630px;">Home</span>
<span class="t " style="left:185.50px;top:23.60px;font-size:17.33px;line-height:22px;color:#212529;letter-spacing:0.326px;">Catalog</span>
<span class="t " style="left:310.50px;top:23.60px;font-size:17.33px;line-height:22px;color:#212529;letter-spacing:0.276px;">Charts</span>
<span class="t " style="left:424.50px;top:23.60px;font-size:17.33px;line-height:22px;color:#212529;letter-spacing:0.169px;">Defaults</span>
<span class="t " style="left:555.00px;top:23.60px;font-size:17.33px;line-height:22px;color:#212529;letter-spacing:0.280px;">Guide Sheet</span>
<span class="t " style="left:723.50px;top:23.60px;font-size:17.33px;line-height:22px;color:#212529;letter-spacing:-0.149px;">View</span>
<span class="t " style="left:840.60px;top:23.60px;font-size:17.33px;line-height:22px;color:#212529;letter-spacing:1.076px;">Save</span>
<span class="t " style="left:941.90px;top:23.60px;font-size:17.33px;line-height:22px;color:#212529;letter-spacing:0.409px;">Print</span>
<span class="t " style="left:1049.00px;top:23.60px;font-size:17.33px;line-height:22px;color:#212529;letter-spacing:0.432px;">Help</span>
<span class="t " style="left:1155.90px;top:23.60px;font-size:17.33px;line-height:22px;color:#212529;letter-spacing:0.735px;">Calc:</span>
<span class="t " style="left:1298.30px;top:23.40px;font-size:17.33px;line-height:22px;color:#212529;letter-spacing:0.722px;">Chart Name: Sample_Women</span>
<span class="t " style="left:76.20px;top:121.57px;font-size:18px;line-height:22px;color:#0a96ea;letter-spacing:0.077px;">Patterns</span>
<span class="t " style="left:213.00px;top:123.27px;font-size:18px;line-height:22px;color:#555;letter-spacing:0.228px;">Style Summary</span>
<span class="t " style="left:418.00px;top:123.27px;font-size:18px;line-height:22px;color:#555;letter-spacing:-0.181px;">Defaults</span>
<span class="t " style="left:876.90px;top:134.27px;font-size:18px;line-height:22px;color:#0a96ea;letter-spacing:0.141px;">Style</span>
<span class="t " style="left:985.50px;top:135.27px;font-size:18px;line-height:22px;color:#555;letter-spacing:-0.007px;">Settings</span>
<span class="t " style="left:1146.80px;top:135.27px;font-size:18px;line-height:22px;color:#555;letter-spacing:0.224px;">Collars/Sleeves</span>
<span class="t " style="left:104.80px;top:751.37px;font-size:18px;line-height:22px;color:#0a96ea;letter-spacing:0.308px;">Collar/Sleeve</span>
<span class="t " style="left:290.00px;top:752.17px;font-size:18px;line-height:22px;color:#555;letter-spacing:0.224px;">Pocket</span>
<span class="t " style="left:852.10px;top:190.46px;font-size:16px;line-height:20px;color:#8c8c8c;letter-spacing:0.432px;">Style: T1102-W</span>
<span class="t " style="left:1165.00px;top:190.46px;font-size:16px;line-height:20px;color:#8c8c8c;letter-spacing:0.444px;">Style Options</span>
<span class="t " style="left:852.90px;top:930.46px;font-size:16px;line-height:20px;color:#8c8c8c;letter-spacing:0.178px;">Style Description</span>
<span class="t " style="left:1197.40px;top:216.16px;font-size:16px;line-height:20px;color:#000;letter-spacing:0.489px;">Style</span>
<span class="t " style="left:1216.50px;top:236.16px;font-size:16px;line-height:20px;color:#000;letter-spacing:0.313px;">Dress Shirt</span>
<span class="t " style="left:1197.40px;top:256.16px;font-size:16px;line-height:20px;color:#000;letter-spacing:0.160px;">Front Neck</span>
<span class="t " style="left:1218.50px;top:276.16px;font-size:16px;line-height:20px;color:#000;letter-spacing:0.502px;">Jewel</span>
<span class="t " style="left:1197.40px;top:296.16px;font-size:16px;line-height:20px;color:#000;letter-spacing:-0.092px;">Back Neck</span>
<span class="t " style="left:1218.50px;top:316.16px;font-size:16px;line-height:20px;color:#000;letter-spacing:0.502px;">Jewel</span>
<span class="t " style="left:1198.40px;top:336.16px;font-size:16px;line-height:20px;color:#000;letter-spacing:0.232px;">Closure</span>
<span class="t " style="left:1216.50px;top:356.16px;font-size:16px;line-height:20px;color:#000;letter-spacing:0.353px;">Button Placket</span>
<span class="t " style="left:1197.40px;top:376.16px;font-size:16px;line-height:20px;color:#000;letter-spacing:0.418px;">Num Front Torso Darts</span>
<span class="t " style="left:1216.50px;top:396.16px;font-size:16px;line-height:20px;color:#000;letter-spacing:0.293px;">0 Darts</span>
<span class="t " style="left:1217.60px;top:416.16px;font-size:16px;line-height:20px;color:#000;letter-spacing:0.086px;">1 Dart</span>
<span class="t " style="left:1197.40px;top:436.16px;font-size:16px;line-height:20px;color:#000;letter-spacing:0.304px;">Num Back Torso Darts</span>
<span class="t " style="left:1216.50px;top:456.16px;font-size:16px;line-height:20px;color:#000;letter-spacing:0.293px;">0 Darts</span>
<span class="t " style="left:1217.60px;top:476.16px;font-size:16px;line-height:20px;color:#000;letter-spacing:0.086px;">1 Dart</span>
<span class="t " style="left:1198.40px;top:496.16px;font-size:16px;line-height:20px;color:#000;letter-spacing:0.009px;">Collar</span>
<span class="t " style="left:1216.50px;top:516.16px;font-size:16px;line-height:20px;color:#000;letter-spacing:0.225px;">No Collar</span>
<span class="t " style="left:1216.50px;top:536.16px;font-size:16px;line-height:20px;color:#000;letter-spacing:0.313px;">Dress Shirt</span>
<span class="t " style="left:1216.50px;top:556.16px;font-size:16px;line-height:20px;color:#000;letter-spacing:0.067px;">Mandarin</span>
<span class="t " style="left:1197.40px;top:576.16px;font-size:16px;line-height:20px;color:#000;letter-spacing:0.268px;">Sleeve</span>
<span class="t " style="left:1216.50px;top:596.16px;font-size:16px;line-height:20px;color:#000;letter-spacing:1.044px;">Set In</span>
<span class="t clip" style="left:1197.40px;top:616.16px;font-size:16px;line-height:20px;color:#000;letter-spacing:0.272px;">Sleeve Length</span>
<span class="t " style="left:847.50px;top:956.91px;font-size:15px;line-height:19px;color:#000;letter-spacing:0.772px;">Dress shirt has front button placket, back yoke, optional center</span>
<span class="t " style="left:847.50px;top:974.91px;font-size:15px;line-height:19px;color:#000;letter-spacing:0.760px;">back pleat, mandarin or shirt collar with optional collar band, set in</span>
<span class="t " style="left:848.50px;top:992.91px;font-size:15px;line-height:19px;color:#000;letter-spacing:0.789px;">sleeves with optional shirt cuff and bound sleeve placket, and</span>
<span class="t " style="left:848.50px;top:1010.91px;font-size:15px;line-height:19px;color:#000;letter-spacing:0.789px;">optional pockets</span>
</body></html>
